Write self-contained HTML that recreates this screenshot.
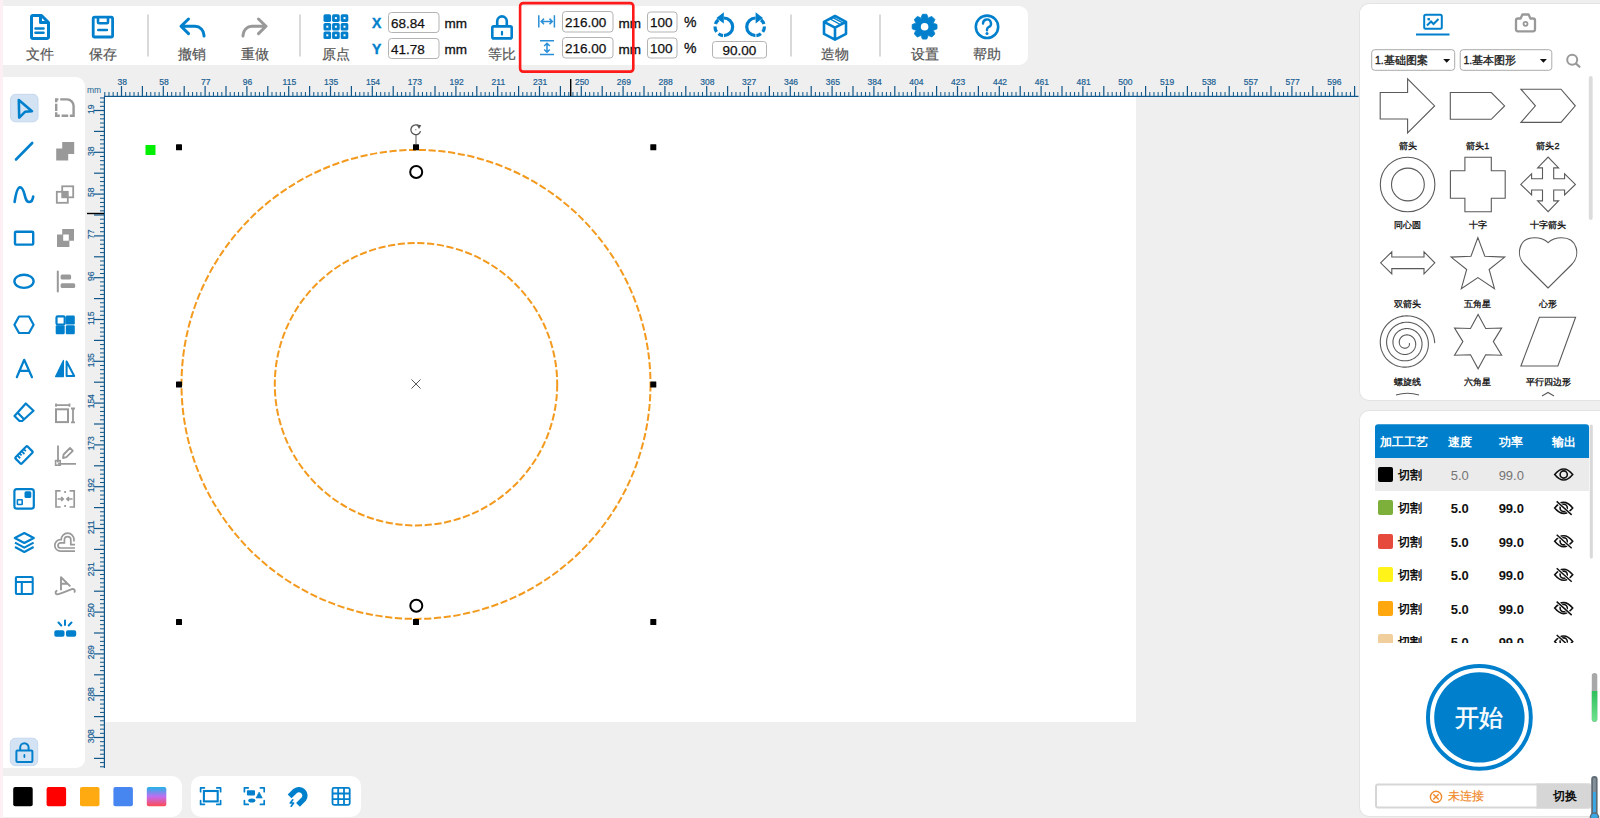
<!DOCTYPE html>
<html><head><meta charset="utf-8"><style>
html,body{margin:0;padding:0;}
body{width:1600px;height:818px;overflow:hidden;position:relative;background:#efefef;font-family:"Liberation Sans",sans-serif;}
.t{position:absolute;white-space:nowrap;}
svg.g{position:absolute;left:0;top:0;}
</style></head><body>
<div style="position:absolute;left:0px;top:0px;width:3px;height:818px;background:#fdf0f4;border-radius:0px;"></div><div style="position:absolute;left:3px;top:6px;width:1025px;height:59px;background:#fff;border-radius:0 9px 9px 0;"></div><div style="position:absolute;left:3px;top:77px;width:82px;height:691px;background:#fff;border-radius:0 9px 9px 0;"></div><div style="position:absolute;left:3px;top:776px;width:179px;height:41px;background:#fff;border-radius:0 10px 10px 0;"></div><div style="position:absolute;left:191px;top:776px;width:170px;height:41px;background:#fff;border-radius:10px;"></div><div style="position:absolute;left:104.5px;top:97px;width:1031.5px;height:625px;background:#fff;border-radius:0px;"></div><div style="position:absolute;left:1359.5px;top:3.5px;width:260px;height:396px;background:#fff;border-radius:9px;box-shadow:0 0 0 1px #e3e3e3;"></div><div style="position:absolute;left:1359.5px;top:410.5px;width:260px;height:405px;background:#fff;border-radius:9px;box-shadow:0 0 0 1px #e3e3e3;"></div>
<svg class="g" width="1600" height="818" viewBox="0 0 1600 818" style="z-index:1"><rect x="147" y="14.5" width="2" height="42" rx="0" fill="#d9d9d9" stroke="none" stroke-width="1" /><rect x="299" y="14.5" width="2" height="42" rx="0" fill="#d9d9d9" stroke="none" stroke-width="1" /><rect x="790" y="14.5" width="2" height="42" rx="0" fill="#d9d9d9" stroke="none" stroke-width="1" /><rect x="879" y="14.5" width="2" height="42" rx="0" fill="#d9d9d9" stroke="none" stroke-width="1" /><path d="M31.5 17 a1.5 1.5 0 0 1 1.5 -1.5 h8.5 l7 7 v14.5 a1.5 1.5 0 0 1 -1.5 1.5 h-14 a1.5 1.5 0 0 1 -1.5 -1.5 z" fill="none" stroke="#0080cc" stroke-width="3" stroke-linejoin="round"/><path d="M40.5 16 v6.5 h7" fill="none" stroke="#0080cc" stroke-width="3" stroke-linejoin="round"/><path d="M35.5 28.5 h8 M35.5 32.8 h8" stroke="#0080cc" stroke-width="2.6" stroke-linecap="round"/><rect x="93.2" y="17.2" width="19.4" height="19.8" rx="1.5" fill="none" stroke="#0080cc" stroke-width="2.8"/><path d="M98 17.5 v4.8 a1 1 0 0 0 1 1 h8 a1 1 0 0 0 1 -1 v-4.8" fill="none" stroke="#0080cc" stroke-width="2.6"/><path d="M98.3 30 h8.6" stroke="#0080cc" stroke-width="2.6" stroke-linecap="round"/><path d="M188.5 19 l-7.5 7.3 l7.5 7.3 M181.5 26.3 h13.5 a9 9 0 0 1 9 9 v0.8" fill="none" stroke="#0080cc" stroke-width="3" stroke-linecap="round" stroke-linejoin="round"/><path d="M258.5 19 l7.5 7.3 l-7.5 7.3 M265.5 26.3 h-13.5 a9 9 0 0 0 -9 9 v0.8" fill="none" stroke="#999999" stroke-width="3" stroke-linecap="round" stroke-linejoin="round"/><rect x="323.5" y="14.3" width="7.6" height="7.6" rx="1.6" fill="#0080cc" stroke="none" stroke-width="1" /><rect x="323.5" y="22.9" width="7.6" height="7.6" rx="1.6" fill="#0080cc" stroke="none" stroke-width="1" /><rect x="326.3" y="25.7" width="2" height="2" rx="0" fill="#fff" stroke="none" stroke-width="1" /><rect x="323.5" y="31.5" width="7.6" height="7.6" rx="1.6" fill="#0080cc" stroke="none" stroke-width="1" /><rect x="326.3" y="34.3" width="2" height="2" rx="0" fill="#fff" stroke="none" stroke-width="1" /><rect x="332.1" y="14.3" width="7.6" height="7.6" rx="1.6" fill="#0080cc" stroke="none" stroke-width="1" /><rect x="334.90000000000003" y="17.1" width="2" height="2" rx="0" fill="#fff" stroke="none" stroke-width="1" /><rect x="332.1" y="22.9" width="7.6" height="7.6" rx="1.6" fill="#0080cc" stroke="none" stroke-width="1" /><rect x="334.90000000000003" y="25.7" width="2" height="2" rx="0" fill="#fff" stroke="none" stroke-width="1" /><rect x="332.1" y="31.5" width="7.6" height="7.6" rx="1.6" fill="#0080cc" stroke="none" stroke-width="1" /><rect x="334.90000000000003" y="34.3" width="2" height="2" rx="0" fill="#fff" stroke="none" stroke-width="1" /><rect x="340.7" y="14.3" width="7.6" height="7.6" rx="1.6" fill="#0080cc" stroke="none" stroke-width="1" /><rect x="343.5" y="17.1" width="2" height="2" rx="0" fill="#fff" stroke="none" stroke-width="1" /><rect x="340.7" y="22.9" width="7.6" height="7.6" rx="1.6" fill="#0080cc" stroke="none" stroke-width="1" /><rect x="343.5" y="25.7" width="2" height="2" rx="0" fill="#fff" stroke="none" stroke-width="1" /><rect x="340.7" y="31.5" width="7.6" height="7.6" rx="1.6" fill="#0080cc" stroke="none" stroke-width="1" /><rect x="343.5" y="34.3" width="2" height="2" rx="0" fill="#fff" stroke="none" stroke-width="1" /><rect x="388.5" y="12.5" width="50.5" height="20" rx="3" fill="#fff" stroke="#b3b3b3" stroke-width="1"/><rect x="388.5" y="38.5" width="50.5" height="20" rx="3" fill="#fff" stroke="#b3b3b3" stroke-width="1"/><path d="M497.2 25.5 v-4.3 a4.8 4.8 0 0 1 9.6 0 v4.3" fill="none" stroke="#0080cc" stroke-width="2.6"/><rect x="492.3" y="26.4" width="19.4" height="12" rx="1.5" fill="none" stroke="#0080cc" stroke-width="2.6"/><path d="M502 31.8 v2.8" stroke="#0080cc" stroke-width="2.2" stroke-linecap="round"/><path d="M538.8 15.2 v12.2 M554.4 15.2 v12.2 M541 21.4 h11.5 M544 18.6 l-2.8 2.8 l2.8 2.8 M549.5 18.6 l2.8 2.8 l-2.8 2.8" fill="none" stroke="#2a8fd6" stroke-width="1.5"/><path d="M540 40.8 h14 M540 54.5 h14 M547 43 v9.5 M544.2 46 l2.8 -2.8 l2.8 2.8 M544.2 49.5 l2.8 2.8 l2.8 -2.8" fill="none" stroke="#2a8fd6" stroke-width="1.5"/><rect x="562.5" y="11.5" width="50.5" height="20.5" rx="3" fill="#fff" stroke="#b3b3b3" stroke-width="1"/><rect x="562.5" y="37.5" width="50.5" height="20.5" rx="3" fill="#fff" stroke="#b3b3b3" stroke-width="1"/><rect x="647.5" y="12.0" width="29.5" height="20" rx="3" fill="#fff" stroke="#b3b3b3" stroke-width="1"/><rect x="647.5" y="38.0" width="29.5" height="20" rx="3" fill="#fff" stroke="#b3b3b3" stroke-width="1"/><path d="M723.80 18.00 A8.8 8.8 0 0 1 723.95 35.60" fill="none" stroke="#0080cc" stroke-width="3.2"/><path d="M723.03 35.57 A8.8 8.8 0 0 1 718.50 33.83" fill="none" stroke="#0080cc" stroke-width="3.2"/><path d="M716.59 31.85 A8.8 8.8 0 0 1 715.01 26.49" fill="none" stroke="#0080cc" stroke-width="3.2"/><path d="M715.43 24.08 A8.8 8.8 0 0 1 718.38 19.87" fill="none" stroke="#0080cc" stroke-width="3.2"/><path d="M723.80 12.2 L716.40 17.9 L723.80 23.4 Z" fill="#0080cc"/><path d="M755.45 35.60 A8.8 8.8 0 0 1 755.60 18.00" fill="none" stroke="#0080cc" stroke-width="3.2"/><path d="M760.90 33.83 A8.8 8.8 0 0 1 756.37 35.57" fill="none" stroke="#0080cc" stroke-width="3.2"/><path d="M764.39 26.49 A8.8 8.8 0 0 1 762.81 31.85" fill="none" stroke="#0080cc" stroke-width="3.2"/><path d="M761.02 19.87 A8.8 8.8 0 0 1 763.97 24.08" fill="none" stroke="#0080cc" stroke-width="3.2"/><path d="M755.60 12.2 L763.00 17.9 L755.60 23.4 Z" fill="#0080cc"/><rect x="712.5" y="41.5" width="54" height="16.5" rx="3" fill="#fff" stroke="#b3b3b3" stroke-width="1"/><path d="M835 16 l11 5.8 v12 l-11 5.8 l-11 -5.8 v-12 z M824 21.8 l11 5.8 l11 -5.8 M835 27.6 v12" fill="none" stroke="#0080cc" stroke-width="2.6" stroke-linejoin="round"/><path d="M829.5 18.7 l10.8 5.8 M832.5 17.3 l10.8 5.8" stroke="#0080cc" stroke-width="1.4"/><path d="M921.29 17.05 L922.47 14.28 L926.73 14.28 L927.91 17.05 Q927.51 19.68 929.09 17.54 L931.87 16.41 L934.89 19.43 L933.76 22.21 Q931.62 23.79 934.25 23.39 L937.02 24.57 L937.02 28.83 L934.25 30.01 Q931.62 29.61 933.76 31.19 L934.89 33.97 L931.87 36.99 L929.09 35.86 Q927.51 33.72 927.91 36.35 L926.73 39.12 L922.47 39.12 L921.29 36.35 Q921.69 33.72 920.11 35.86 L917.33 36.99 L914.31 33.97 L915.44 31.19 Q917.58 29.61 914.95 30.01 L912.18 28.83 L912.18 24.57 L914.95 23.39 Q917.58 23.79 915.44 22.21 L914.31 19.43 L917.33 16.41 L920.11 17.54 Q921.69 19.68 921.29 17.05Z" fill="#0080cc" stroke="#0080cc" stroke-width="0.8" stroke-linejoin="round"/><circle cx="924.6" cy="26.7" r="3.8" fill="#fff"/><circle cx="987" cy="26.8" r="11.2" fill="none" stroke="#0080cc" stroke-width="2.6"/><path d="M983 23.5 a4 4 0 1 1 5.6 3.6 c-1 0.5 -1.6 1.2 -1.6 2.4 v0.8" fill="none" stroke="#0080cc" stroke-width="2.4" stroke-linecap="round"/><circle cx="987" cy="33.6" r="1.5" fill="#0080cc"/><rect x="10.5" y="94.3" width="27.5" height="27.5" rx="5" fill="#d4e3f4" stroke="#c5d8ef" stroke-width="1" /><path d="M18.8 100 L32 111.2 L25 111.8 L19.2 117.6 Z" fill="none" stroke="#0080cc" stroke-width="2.6" stroke-linejoin="round"/><path d="M60.2 99.4 H67 A6.6 6.6 0 0 1 73.6 106 V115.7 H69.8 M68.2 115.7 H61.6 M59.8 115.7 H56.2 V112.3 M56.2 111 V103.8 M56.2 102.3 V99.4 H58.4" fill="none" stroke="#999999" stroke-width="2.4"/><path d="M16 159.5 L32.2 143" stroke="#0080cc" stroke-width="2.6" stroke-linecap="round"/><path d="M56.2 160.4 v-12 h6 v-6.4 h12 v12 h-6 v6.4 z" fill="#999999"/><path d="M14.6 202 C16 192 17.5 187.5 20 187.2 C23.5 187 24.2 194 25.5 198 C26.6 201.5 27.8 202.2 29.5 202 C31.5 201.8 32.8 199.5 33.2 196.5" fill="none" stroke="#0080cc" stroke-width="2.6" stroke-linecap="round"/><rect x="62.2" y="186.3" width="11" height="11" fill="none" stroke="#999999" stroke-width="1.8"/><rect x="56.8" y="191.8" width="11" height="11" fill="none" stroke="#999999" stroke-width="1.8"/><rect x="62.2" y="191.8" width="5.5" height="5.5" rx="0" fill="#999999" stroke="none" stroke-width="1" /><rect x="15" y="231.8" width="18.2" height="12.8" rx="1" fill="none" stroke="#0080cc" stroke-width="2.4"/><path d="M57 234.5 h6.2 v6.2 h6.2 v6.2 h-12.4 z M62.2 229 h11.8 v11.8 h-5.2 v-6.3 h-6.6 z" fill="#999999"/><ellipse cx="24" cy="281.3" rx="9.6" ry="6.6" fill="none" stroke="#0080cc" stroke-width="2.4"/><path d="M57.8 271.5 v20" stroke="#999999" stroke-width="2" stroke-linecap="round"/><rect x="60.6" y="274.6" width="10.5" height="4.8" rx="1.5" fill="#999999" stroke="none" stroke-width="1" /><rect x="60.6" y="283.2" width="14.6" height="4.8" rx="1.5" fill="#999999" stroke="none" stroke-width="1" /><path d="M14.4 324.8 L19 316.5 H29 L33.6 324.8 L29 333 H19 Z" fill="none" stroke="#0080cc" stroke-width="2.2" stroke-linejoin="round"/><rect x="56.5" y="316.3" width="8.2" height="8.2" rx="1.2" fill="none" stroke="#0080cc" stroke-width="2.2" /><rect x="65.8" y="315.5" width="9" height="9" rx="1.2" fill="#0080cc" stroke="none" stroke-width="1" /><rect x="55.7" y="325.2" width="9" height="9" rx="1.2" fill="#0080cc" stroke="none" stroke-width="1" /><rect x="65.8" y="325.2" width="9" height="9" rx="1.2" fill="#0080cc" stroke="none" stroke-width="1" /><path d="M16.8 377.2 L24.2 359.8 L32 377.2 M19.3 370.9 H29.3" fill="none" stroke="#0080cc" stroke-width="2.2" stroke-linecap="round" stroke-linejoin="round"/><path d="M63.4 360.5 V376.6 H55.6 Z" fill="#0080cc" stroke="#0080cc" stroke-width="1.2" stroke-linejoin="round"/><path d="M66.6 361.5 V376 H74.2 Z" fill="none" stroke="#0080cc" stroke-width="2" stroke-linejoin="round"/><path d="M19.5 421 L14.5 416 L25.8 403.5 L33.5 410.8 L22.2 421 Z M17.5 412.6 L23.8 419" fill="none" stroke="#0080cc" stroke-width="2.2" stroke-linejoin="round"/><path d="M56 403.5 v3.2 M69.5 403.5 v3.2 M56 405.1 h13.5 M71 408.5 h4 M71 422.4 h4 M73 408.5 v13.9" fill="none" stroke="#999999" stroke-width="1.8"/><rect x="56" y="409.3" width="12" height="12.8" fill="none" stroke="#999999" stroke-width="2"/><g transform="rotate(-45 24 455)"><rect x="15.5" y="450.6" width="17" height="8.8" rx="1" fill="none" stroke="#0080cc" stroke-width="2.2"/><path d="M19 451 v3.6 M22 451 v2.6 M25 451 v3.6 M28 451 v2.6" stroke="#0080cc" stroke-width="1.8"/></g><path d="M58 445.5 V462.5 M58 463.8 H76" stroke="#999999" stroke-width="1.8"/><rect x="55.6" y="460.6" width="4.6" height="4.6" rx="0" fill="none" stroke="#999999" stroke-width="1.6" /><path d="M63 458 L63.6 454.5 L70 448 L72.8 450.8 L66.4 457.2 Z" fill="none" stroke="#999999" stroke-width="1.8" stroke-linejoin="round"/><rect x="14.4" y="489.1" width="19.4" height="19.6" rx="2.4" fill="none" stroke="#0080cc" stroke-width="2.2"/><rect x="24.5" y="491.2" width="6.8" height="6.8" rx="1.5" fill="#0080cc" stroke="none" stroke-width="1" /><rect x="17.4" y="499.7" width="4.8" height="4.8" rx="0.5" fill="none" stroke="#0080cc" stroke-width="1.6" /><path d="M60.6 490.8 H56 V507 H60.6 M69.6 490.8 H74.2 V507 H69.6 M65.1 491 V493 M65.1 505 V507 M57.5 499 H63.3 M61.2 497 l2 2 l-2 2 M72.6 499 H66.8 M68.9 497 l-2 2 l2 2" fill="none" stroke="#999999" stroke-width="1.7"/><path d="M24.3 533 L33.8 538 L24.3 543 L14.8 538 Z" fill="none" stroke="#0080cc" stroke-width="2.2" stroke-linejoin="round"/><path d="M15 542.6 L24.3 547.6 L33.6 542.6 M15 547 L24.3 552 L33.6 547" fill="none" stroke="#0080cc" stroke-width="2.2" stroke-linejoin="round"/><path d="M75 551.2 H60.6 A5.8 5.8 0 0 1 60.6 539.6 H61.2 A6.4 6.4 0 0 1 74 539.6 V541.6" fill="none" stroke="#999999" stroke-width="1.7"/><path d="M75 548 H60.6 A2.6 2.6 0 0 1 60.6 542.8 H64.4 V539.8 A3.2 3.2 0 0 1 70.8 539.8 V544.7 H75" fill="none" stroke="#999999" stroke-width="1.7"/><rect x="15.9" y="577" width="16.8" height="17" rx="1" fill="none" stroke="#0080cc" stroke-width="2.1"/><path d="M16 582 H32.6 M21.8 582 V594" stroke="#0080cc" stroke-width="2.1"/><path d="M61 590.2 V577.2 L70.3 586.4 M61 583.8 H67.4" fill="none" stroke="#999999" stroke-width="1.9" stroke-linejoin="round"/><path d="M56.6 590.8 C55 591.5 55.2 594.6 57.5 594.4 C62 593.5 67 591 71.8 589.2 C73.5 588.6 75.5 589.8 74.6 591.8" fill="none" stroke="#999999" stroke-width="1.9" stroke-linecap="round"/><path d="M65 620.5 V625 M58.5 622.5 l2.8 3 M71.5 622.5 l-2.8 3" stroke="#0080cc" stroke-width="2" stroke-linecap="round"/><rect x="54.3" y="630.2" width="10.2" height="6.6" rx="1.8" fill="#0080cc" stroke="none" stroke-width="1" /><rect x="66" y="630.2" width="10.2" height="6.6" rx="1.8" fill="#0080cc" stroke="none" stroke-width="1" /><rect x="10.3" y="738.2" width="27.4" height="27.4" rx="5" fill="#d4e3f4" stroke="#c5d8ef" stroke-width="1" /><path d="M20.2 750 v-2.5 a4.2 4.2 0 0 1 8.4 0 v2.5" fill="none" stroke="#0080cc" stroke-width="2"/><rect x="16.4" y="750.5" width="16" height="11.4" rx="1" fill="none" stroke="#0080cc" stroke-width="2"/><path d="M24.4 755 v2" stroke="#0080cc" stroke-width="1.8" stroke-linecap="round"/><rect x="104" y="95.8" width="1254.5" height="1.2" fill="#0f578b"/><rect x="103.8" y="97" width="1.2" height="671" fill="#0f578b"/><rect x="104.28" y="92" width="1" height="4" fill="#0f578b"/><rect x="108.46" y="92" width="1" height="4" fill="#0f578b"/><rect x="112.64" y="92" width="1" height="4" fill="#0f578b"/><rect x="116.82" y="92" width="1" height="4" fill="#0f578b"/><rect x="120.90" y="86" width="1.2" height="10" fill="#0f578b"/><rect x="125.18" y="92" width="1" height="4" fill="#0f578b"/><rect x="129.36" y="92" width="1" height="4" fill="#0f578b"/><rect x="133.54" y="92" width="1" height="4" fill="#0f578b"/><rect x="137.72" y="92" width="1" height="4" fill="#0f578b"/><rect x="141.80" y="86" width="1.2" height="10" fill="#0f578b"/><rect x="146.08" y="92" width="1" height="4" fill="#0f578b"/><rect x="150.26" y="92" width="1" height="4" fill="#0f578b"/><rect x="154.44" y="92" width="1" height="4" fill="#0f578b"/><rect x="158.62" y="92" width="1" height="4" fill="#0f578b"/><rect x="162.70" y="86" width="1.2" height="10" fill="#0f578b"/><rect x="166.98" y="92" width="1" height="4" fill="#0f578b"/><rect x="171.16" y="92" width="1" height="4" fill="#0f578b"/><rect x="175.34" y="92" width="1" height="4" fill="#0f578b"/><rect x="179.52" y="92" width="1" height="4" fill="#0f578b"/><rect x="183.60" y="86" width="1.2" height="10" fill="#0f578b"/><rect x="187.88" y="92" width="1" height="4" fill="#0f578b"/><rect x="192.06" y="92" width="1" height="4" fill="#0f578b"/><rect x="196.24" y="92" width="1" height="4" fill="#0f578b"/><rect x="200.42" y="92" width="1" height="4" fill="#0f578b"/><rect x="204.50" y="86" width="1.2" height="10" fill="#0f578b"/><rect x="208.78" y="92" width="1" height="4" fill="#0f578b"/><rect x="212.96" y="92" width="1" height="4" fill="#0f578b"/><rect x="217.14" y="92" width="1" height="4" fill="#0f578b"/><rect x="221.32" y="92" width="1" height="4" fill="#0f578b"/><rect x="225.40" y="86" width="1.2" height="10" fill="#0f578b"/><rect x="229.68" y="92" width="1" height="4" fill="#0f578b"/><rect x="233.86" y="92" width="1" height="4" fill="#0f578b"/><rect x="238.04" y="92" width="1" height="4" fill="#0f578b"/><rect x="242.22" y="92" width="1" height="4" fill="#0f578b"/><rect x="246.30" y="86" width="1.2" height="10" fill="#0f578b"/><rect x="250.58" y="92" width="1" height="4" fill="#0f578b"/><rect x="254.76" y="92" width="1" height="4" fill="#0f578b"/><rect x="258.94" y="92" width="1" height="4" fill="#0f578b"/><rect x="263.12" y="92" width="1" height="4" fill="#0f578b"/><rect x="267.20" y="86" width="1.2" height="10" fill="#0f578b"/><rect x="271.48" y="92" width="1" height="4" fill="#0f578b"/><rect x="275.66" y="92" width="1" height="4" fill="#0f578b"/><rect x="279.84" y="92" width="1" height="4" fill="#0f578b"/><rect x="284.02" y="92" width="1" height="4" fill="#0f578b"/><rect x="288.10" y="86" width="1.2" height="10" fill="#0f578b"/><rect x="292.38" y="92" width="1" height="4" fill="#0f578b"/><rect x="296.56" y="92" width="1" height="4" fill="#0f578b"/><rect x="300.74" y="92" width="1" height="4" fill="#0f578b"/><rect x="304.92" y="92" width="1" height="4" fill="#0f578b"/><rect x="309.00" y="86" width="1.2" height="10" fill="#0f578b"/><rect x="313.28" y="92" width="1" height="4" fill="#0f578b"/><rect x="317.46" y="92" width="1" height="4" fill="#0f578b"/><rect x="321.64" y="92" width="1" height="4" fill="#0f578b"/><rect x="325.82" y="92" width="1" height="4" fill="#0f578b"/><rect x="329.90" y="86" width="1.2" height="10" fill="#0f578b"/><rect x="334.18" y="92" width="1" height="4" fill="#0f578b"/><rect x="338.36" y="92" width="1" height="4" fill="#0f578b"/><rect x="342.54" y="92" width="1" height="4" fill="#0f578b"/><rect x="346.72" y="92" width="1" height="4" fill="#0f578b"/><rect x="350.80" y="86" width="1.2" height="10" fill="#0f578b"/><rect x="355.08" y="92" width="1" height="4" fill="#0f578b"/><rect x="359.26" y="92" width="1" height="4" fill="#0f578b"/><rect x="363.44" y="92" width="1" height="4" fill="#0f578b"/><rect x="367.62" y="92" width="1" height="4" fill="#0f578b"/><rect x="371.70" y="86" width="1.2" height="10" fill="#0f578b"/><rect x="375.98" y="92" width="1" height="4" fill="#0f578b"/><rect x="380.16" y="92" width="1" height="4" fill="#0f578b"/><rect x="384.34" y="92" width="1" height="4" fill="#0f578b"/><rect x="388.52" y="92" width="1" height="4" fill="#0f578b"/><rect x="392.60" y="86" width="1.2" height="10" fill="#0f578b"/><rect x="396.88" y="92" width="1" height="4" fill="#0f578b"/><rect x="401.06" y="92" width="1" height="4" fill="#0f578b"/><rect x="405.24" y="92" width="1" height="4" fill="#0f578b"/><rect x="409.42" y="92" width="1" height="4" fill="#0f578b"/><rect x="413.50" y="86" width="1.2" height="10" fill="#0f578b"/><rect x="417.78" y="92" width="1" height="4" fill="#0f578b"/><rect x="421.96" y="92" width="1" height="4" fill="#0f578b"/><rect x="426.14" y="92" width="1" height="4" fill="#0f578b"/><rect x="430.32" y="92" width="1" height="4" fill="#0f578b"/><rect x="434.40" y="86" width="1.2" height="10" fill="#0f578b"/><rect x="438.68" y="92" width="1" height="4" fill="#0f578b"/><rect x="442.86" y="92" width="1" height="4" fill="#0f578b"/><rect x="447.04" y="92" width="1" height="4" fill="#0f578b"/><rect x="451.22" y="92" width="1" height="4" fill="#0f578b"/><rect x="455.30" y="86" width="1.2" height="10" fill="#0f578b"/><rect x="459.58" y="92" width="1" height="4" fill="#0f578b"/><rect x="463.76" y="92" width="1" height="4" fill="#0f578b"/><rect x="467.94" y="92" width="1" height="4" fill="#0f578b"/><rect x="472.12" y="92" width="1" height="4" fill="#0f578b"/><rect x="476.20" y="86" width="1.2" height="10" fill="#0f578b"/><rect x="480.48" y="92" width="1" height="4" fill="#0f578b"/><rect x="484.66" y="92" width="1" height="4" fill="#0f578b"/><rect x="488.84" y="92" width="1" height="4" fill="#0f578b"/><rect x="493.02" y="92" width="1" height="4" fill="#0f578b"/><rect x="497.10" y="86" width="1.2" height="10" fill="#0f578b"/><rect x="501.38" y="92" width="1" height="4" fill="#0f578b"/><rect x="505.56" y="92" width="1" height="4" fill="#0f578b"/><rect x="509.74" y="92" width="1" height="4" fill="#0f578b"/><rect x="513.92" y="92" width="1" height="4" fill="#0f578b"/><rect x="518.00" y="86" width="1.2" height="10" fill="#0f578b"/><rect x="522.28" y="92" width="1" height="4" fill="#0f578b"/><rect x="526.46" y="92" width="1" height="4" fill="#0f578b"/><rect x="530.64" y="92" width="1" height="4" fill="#0f578b"/><rect x="534.82" y="92" width="1" height="4" fill="#0f578b"/><rect x="538.90" y="86" width="1.2" height="10" fill="#0f578b"/><rect x="543.18" y="92" width="1" height="4" fill="#0f578b"/><rect x="547.36" y="92" width="1" height="4" fill="#0f578b"/><rect x="551.54" y="92" width="1" height="4" fill="#0f578b"/><rect x="555.72" y="92" width="1" height="4" fill="#0f578b"/><rect x="559.80" y="86" width="1.2" height="10" fill="#0f578b"/><rect x="564.08" y="92" width="1" height="4" fill="#0f578b"/><rect x="568.26" y="92" width="1" height="4" fill="#0f578b"/><rect x="572.44" y="92" width="1" height="4" fill="#0f578b"/><rect x="576.62" y="92" width="1" height="4" fill="#0f578b"/><rect x="580.70" y="86" width="1.2" height="10" fill="#0f578b"/><rect x="584.98" y="92" width="1" height="4" fill="#0f578b"/><rect x="589.16" y="92" width="1" height="4" fill="#0f578b"/><rect x="593.34" y="92" width="1" height="4" fill="#0f578b"/><rect x="597.52" y="92" width="1" height="4" fill="#0f578b"/><rect x="601.60" y="86" width="1.2" height="10" fill="#0f578b"/><rect x="605.88" y="92" width="1" height="4" fill="#0f578b"/><rect x="610.06" y="92" width="1" height="4" fill="#0f578b"/><rect x="614.24" y="92" width="1" height="4" fill="#0f578b"/><rect x="618.42" y="92" width="1" height="4" fill="#0f578b"/><rect x="622.50" y="86" width="1.2" height="10" fill="#0f578b"/><rect x="626.78" y="92" width="1" height="4" fill="#0f578b"/><rect x="630.96" y="92" width="1" height="4" fill="#0f578b"/><rect x="635.14" y="92" width="1" height="4" fill="#0f578b"/><rect x="639.32" y="92" width="1" height="4" fill="#0f578b"/><rect x="643.40" y="86" width="1.2" height="10" fill="#0f578b"/><rect x="647.68" y="92" width="1" height="4" fill="#0f578b"/><rect x="651.86" y="92" width="1" height="4" fill="#0f578b"/><rect x="656.04" y="92" width="1" height="4" fill="#0f578b"/><rect x="660.22" y="92" width="1" height="4" fill="#0f578b"/><rect x="664.30" y="86" width="1.2" height="10" fill="#0f578b"/><rect x="668.58" y="92" width="1" height="4" fill="#0f578b"/><rect x="672.76" y="92" width="1" height="4" fill="#0f578b"/><rect x="676.94" y="92" width="1" height="4" fill="#0f578b"/><rect x="681.12" y="92" width="1" height="4" fill="#0f578b"/><rect x="685.20" y="86" width="1.2" height="10" fill="#0f578b"/><rect x="689.48" y="92" width="1" height="4" fill="#0f578b"/><rect x="693.66" y="92" width="1" height="4" fill="#0f578b"/><rect x="697.84" y="92" width="1" height="4" fill="#0f578b"/><rect x="702.02" y="92" width="1" height="4" fill="#0f578b"/><rect x="706.10" y="86" width="1.2" height="10" fill="#0f578b"/><rect x="710.38" y="92" width="1" height="4" fill="#0f578b"/><rect x="714.56" y="92" width="1" height="4" fill="#0f578b"/><rect x="718.74" y="92" width="1" height="4" fill="#0f578b"/><rect x="722.92" y="92" width="1" height="4" fill="#0f578b"/><rect x="727.00" y="86" width="1.2" height="10" fill="#0f578b"/><rect x="731.28" y="92" width="1" height="4" fill="#0f578b"/><rect x="735.46" y="92" width="1" height="4" fill="#0f578b"/><rect x="739.64" y="92" width="1" height="4" fill="#0f578b"/><rect x="743.82" y="92" width="1" height="4" fill="#0f578b"/><rect x="747.90" y="86" width="1.2" height="10" fill="#0f578b"/><rect x="752.18" y="92" width="1" height="4" fill="#0f578b"/><rect x="756.36" y="92" width="1" height="4" fill="#0f578b"/><rect x="760.54" y="92" width="1" height="4" fill="#0f578b"/><rect x="764.72" y="92" width="1" height="4" fill="#0f578b"/><rect x="768.80" y="86" width="1.2" height="10" fill="#0f578b"/><rect x="773.08" y="92" width="1" height="4" fill="#0f578b"/><rect x="777.26" y="92" width="1" height="4" fill="#0f578b"/><rect x="781.44" y="92" width="1" height="4" fill="#0f578b"/><rect x="785.62" y="92" width="1" height="4" fill="#0f578b"/><rect x="789.70" y="86" width="1.2" height="10" fill="#0f578b"/><rect x="793.98" y="92" width="1" height="4" fill="#0f578b"/><rect x="798.16" y="92" width="1" height="4" fill="#0f578b"/><rect x="802.34" y="92" width="1" height="4" fill="#0f578b"/><rect x="806.52" y="92" width="1" height="4" fill="#0f578b"/><rect x="810.60" y="86" width="1.2" height="10" fill="#0f578b"/><rect x="814.88" y="92" width="1" height="4" fill="#0f578b"/><rect x="819.06" y="92" width="1" height="4" fill="#0f578b"/><rect x="823.24" y="92" width="1" height="4" fill="#0f578b"/><rect x="827.42" y="92" width="1" height="4" fill="#0f578b"/><rect x="831.50" y="86" width="1.2" height="10" fill="#0f578b"/><rect x="835.78" y="92" width="1" height="4" fill="#0f578b"/><rect x="839.96" y="92" width="1" height="4" fill="#0f578b"/><rect x="844.14" y="92" width="1" height="4" fill="#0f578b"/><rect x="848.32" y="92" width="1" height="4" fill="#0f578b"/><rect x="852.40" y="86" width="1.2" height="10" fill="#0f578b"/><rect x="856.68" y="92" width="1" height="4" fill="#0f578b"/><rect x="860.86" y="92" width="1" height="4" fill="#0f578b"/><rect x="865.04" y="92" width="1" height="4" fill="#0f578b"/><rect x="869.22" y="92" width="1" height="4" fill="#0f578b"/><rect x="873.30" y="86" width="1.2" height="10" fill="#0f578b"/><rect x="877.58" y="92" width="1" height="4" fill="#0f578b"/><rect x="881.76" y="92" width="1" height="4" fill="#0f578b"/><rect x="885.94" y="92" width="1" height="4" fill="#0f578b"/><rect x="890.12" y="92" width="1" height="4" fill="#0f578b"/><rect x="894.20" y="86" width="1.2" height="10" fill="#0f578b"/><rect x="898.48" y="92" width="1" height="4" fill="#0f578b"/><rect x="902.66" y="92" width="1" height="4" fill="#0f578b"/><rect x="906.84" y="92" width="1" height="4" fill="#0f578b"/><rect x="911.02" y="92" width="1" height="4" fill="#0f578b"/><rect x="915.10" y="86" width="1.2" height="10" fill="#0f578b"/><rect x="919.38" y="92" width="1" height="4" fill="#0f578b"/><rect x="923.56" y="92" width="1" height="4" fill="#0f578b"/><rect x="927.74" y="92" width="1" height="4" fill="#0f578b"/><rect x="931.92" y="92" width="1" height="4" fill="#0f578b"/><rect x="936.00" y="86" width="1.2" height="10" fill="#0f578b"/><rect x="940.28" y="92" width="1" height="4" fill="#0f578b"/><rect x="944.46" y="92" width="1" height="4" fill="#0f578b"/><rect x="948.64" y="92" width="1" height="4" fill="#0f578b"/><rect x="952.82" y="92" width="1" height="4" fill="#0f578b"/><rect x="956.90" y="86" width="1.2" height="10" fill="#0f578b"/><rect x="961.18" y="92" width="1" height="4" fill="#0f578b"/><rect x="965.36" y="92" width="1" height="4" fill="#0f578b"/><rect x="969.54" y="92" width="1" height="4" fill="#0f578b"/><rect x="973.72" y="92" width="1" height="4" fill="#0f578b"/><rect x="977.80" y="86" width="1.2" height="10" fill="#0f578b"/><rect x="982.08" y="92" width="1" height="4" fill="#0f578b"/><rect x="986.26" y="92" width="1" height="4" fill="#0f578b"/><rect x="990.44" y="92" width="1" height="4" fill="#0f578b"/><rect x="994.62" y="92" width="1" height="4" fill="#0f578b"/><rect x="998.70" y="86" width="1.2" height="10" fill="#0f578b"/><rect x="1002.98" y="92" width="1" height="4" fill="#0f578b"/><rect x="1007.16" y="92" width="1" height="4" fill="#0f578b"/><rect x="1011.34" y="92" width="1" height="4" fill="#0f578b"/><rect x="1015.52" y="92" width="1" height="4" fill="#0f578b"/><rect x="1019.60" y="86" width="1.2" height="10" fill="#0f578b"/><rect x="1023.88" y="92" width="1" height="4" fill="#0f578b"/><rect x="1028.06" y="92" width="1" height="4" fill="#0f578b"/><rect x="1032.24" y="92" width="1" height="4" fill="#0f578b"/><rect x="1036.42" y="92" width="1" height="4" fill="#0f578b"/><rect x="1040.50" y="86" width="1.2" height="10" fill="#0f578b"/><rect x="1044.78" y="92" width="1" height="4" fill="#0f578b"/><rect x="1048.96" y="92" width="1" height="4" fill="#0f578b"/><rect x="1053.14" y="92" width="1" height="4" fill="#0f578b"/><rect x="1057.32" y="92" width="1" height="4" fill="#0f578b"/><rect x="1061.40" y="86" width="1.2" height="10" fill="#0f578b"/><rect x="1065.68" y="92" width="1" height="4" fill="#0f578b"/><rect x="1069.86" y="92" width="1" height="4" fill="#0f578b"/><rect x="1074.04" y="92" width="1" height="4" fill="#0f578b"/><rect x="1078.22" y="92" width="1" height="4" fill="#0f578b"/><rect x="1082.30" y="86" width="1.2" height="10" fill="#0f578b"/><rect x="1086.58" y="92" width="1" height="4" fill="#0f578b"/><rect x="1090.76" y="92" width="1" height="4" fill="#0f578b"/><rect x="1094.94" y="92" width="1" height="4" fill="#0f578b"/><rect x="1099.12" y="92" width="1" height="4" fill="#0f578b"/><rect x="1103.20" y="86" width="1.2" height="10" fill="#0f578b"/><rect x="1107.48" y="92" width="1" height="4" fill="#0f578b"/><rect x="1111.66" y="92" width="1" height="4" fill="#0f578b"/><rect x="1115.84" y="92" width="1" height="4" fill="#0f578b"/><rect x="1120.02" y="92" width="1" height="4" fill="#0f578b"/><rect x="1124.10" y="86" width="1.2" height="10" fill="#0f578b"/><rect x="1128.38" y="92" width="1" height="4" fill="#0f578b"/><rect x="1132.56" y="92" width="1" height="4" fill="#0f578b"/><rect x="1136.74" y="92" width="1" height="4" fill="#0f578b"/><rect x="1140.92" y="92" width="1" height="4" fill="#0f578b"/><rect x="1145.00" y="86" width="1.2" height="10" fill="#0f578b"/><rect x="1149.28" y="92" width="1" height="4" fill="#0f578b"/><rect x="1153.46" y="92" width="1" height="4" fill="#0f578b"/><rect x="1157.64" y="92" width="1" height="4" fill="#0f578b"/><rect x="1161.82" y="92" width="1" height="4" fill="#0f578b"/><rect x="1165.90" y="86" width="1.2" height="10" fill="#0f578b"/><rect x="1170.18" y="92" width="1" height="4" fill="#0f578b"/><rect x="1174.36" y="92" width="1" height="4" fill="#0f578b"/><rect x="1178.54" y="92" width="1" height="4" fill="#0f578b"/><rect x="1182.72" y="92" width="1" height="4" fill="#0f578b"/><rect x="1186.80" y="86" width="1.2" height="10" fill="#0f578b"/><rect x="1191.08" y="92" width="1" height="4" fill="#0f578b"/><rect x="1195.26" y="92" width="1" height="4" fill="#0f578b"/><rect x="1199.44" y="92" width="1" height="4" fill="#0f578b"/><rect x="1203.62" y="92" width="1" height="4" fill="#0f578b"/><rect x="1207.70" y="86" width="1.2" height="10" fill="#0f578b"/><rect x="1211.98" y="92" width="1" height="4" fill="#0f578b"/><rect x="1216.16" y="92" width="1" height="4" fill="#0f578b"/><rect x="1220.34" y="92" width="1" height="4" fill="#0f578b"/><rect x="1224.52" y="92" width="1" height="4" fill="#0f578b"/><rect x="1228.60" y="86" width="1.2" height="10" fill="#0f578b"/><rect x="1232.88" y="92" width="1" height="4" fill="#0f578b"/><rect x="1237.06" y="92" width="1" height="4" fill="#0f578b"/><rect x="1241.24" y="92" width="1" height="4" fill="#0f578b"/><rect x="1245.42" y="92" width="1" height="4" fill="#0f578b"/><rect x="1249.50" y="86" width="1.2" height="10" fill="#0f578b"/><rect x="1253.78" y="92" width="1" height="4" fill="#0f578b"/><rect x="1257.96" y="92" width="1" height="4" fill="#0f578b"/><rect x="1262.14" y="92" width="1" height="4" fill="#0f578b"/><rect x="1266.32" y="92" width="1" height="4" fill="#0f578b"/><rect x="1270.40" y="86" width="1.2" height="10" fill="#0f578b"/><rect x="1274.68" y="92" width="1" height="4" fill="#0f578b"/><rect x="1278.86" y="92" width="1" height="4" fill="#0f578b"/><rect x="1283.04" y="92" width="1" height="4" fill="#0f578b"/><rect x="1287.22" y="92" width="1" height="4" fill="#0f578b"/><rect x="1291.30" y="86" width="1.2" height="10" fill="#0f578b"/><rect x="1295.58" y="92" width="1" height="4" fill="#0f578b"/><rect x="1299.76" y="92" width="1" height="4" fill="#0f578b"/><rect x="1303.94" y="92" width="1" height="4" fill="#0f578b"/><rect x="1308.12" y="92" width="1" height="4" fill="#0f578b"/><rect x="1312.20" y="86" width="1.2" height="10" fill="#0f578b"/><rect x="1316.48" y="92" width="1" height="4" fill="#0f578b"/><rect x="1320.66" y="92" width="1" height="4" fill="#0f578b"/><rect x="1324.84" y="92" width="1" height="4" fill="#0f578b"/><rect x="1329.02" y="92" width="1" height="4" fill="#0f578b"/><rect x="1333.10" y="86" width="1.2" height="10" fill="#0f578b"/><rect x="1337.38" y="92" width="1" height="4" fill="#0f578b"/><rect x="1341.56" y="92" width="1" height="4" fill="#0f578b"/><rect x="1345.74" y="92" width="1" height="4" fill="#0f578b"/><rect x="1349.92" y="92" width="1" height="4" fill="#0f578b"/><rect x="1354.00" y="86" width="1.2" height="10" fill="#0f578b"/><rect x="100" y="97.46" width="4" height="1" fill="#0f578b"/><rect x="100" y="101.64" width="4" height="1" fill="#0f578b"/><rect x="100" y="105.82" width="4" height="1" fill="#0f578b"/><rect x="94" y="109.90" width="10" height="1.2" fill="#0f578b"/><rect x="100" y="114.18" width="4" height="1" fill="#0f578b"/><rect x="100" y="118.36" width="4" height="1" fill="#0f578b"/><rect x="100" y="122.54" width="4" height="1" fill="#0f578b"/><rect x="100" y="126.72" width="4" height="1" fill="#0f578b"/><rect x="94" y="130.80" width="10" height="1.2" fill="#0f578b"/><rect x="100" y="135.08" width="4" height="1" fill="#0f578b"/><rect x="100" y="139.26" width="4" height="1" fill="#0f578b"/><rect x="100" y="143.44" width="4" height="1" fill="#0f578b"/><rect x="100" y="147.62" width="4" height="1" fill="#0f578b"/><rect x="94" y="151.70" width="10" height="1.2" fill="#0f578b"/><rect x="100" y="155.98" width="4" height="1" fill="#0f578b"/><rect x="100" y="160.16" width="4" height="1" fill="#0f578b"/><rect x="100" y="164.34" width="4" height="1" fill="#0f578b"/><rect x="100" y="168.52" width="4" height="1" fill="#0f578b"/><rect x="94" y="172.60" width="10" height="1.2" fill="#0f578b"/><rect x="100" y="176.88" width="4" height="1" fill="#0f578b"/><rect x="100" y="181.06" width="4" height="1" fill="#0f578b"/><rect x="100" y="185.24" width="4" height="1" fill="#0f578b"/><rect x="100" y="189.42" width="4" height="1" fill="#0f578b"/><rect x="94" y="193.50" width="10" height="1.2" fill="#0f578b"/><rect x="100" y="197.78" width="4" height="1" fill="#0f578b"/><rect x="100" y="201.96" width="4" height="1" fill="#0f578b"/><rect x="100" y="206.14" width="4" height="1" fill="#0f578b"/><rect x="100" y="210.32" width="4" height="1" fill="#0f578b"/><rect x="94" y="214.40" width="10" height="1.2" fill="#0f578b"/><rect x="100" y="218.68" width="4" height="1" fill="#0f578b"/><rect x="100" y="222.86" width="4" height="1" fill="#0f578b"/><rect x="100" y="227.04" width="4" height="1" fill="#0f578b"/><rect x="100" y="231.22" width="4" height="1" fill="#0f578b"/><rect x="94" y="235.30" width="10" height="1.2" fill="#0f578b"/><rect x="100" y="239.58" width="4" height="1" fill="#0f578b"/><rect x="100" y="243.76" width="4" height="1" fill="#0f578b"/><rect x="100" y="247.94" width="4" height="1" fill="#0f578b"/><rect x="100" y="252.12" width="4" height="1" fill="#0f578b"/><rect x="94" y="256.20" width="10" height="1.2" fill="#0f578b"/><rect x="100" y="260.48" width="4" height="1" fill="#0f578b"/><rect x="100" y="264.66" width="4" height="1" fill="#0f578b"/><rect x="100" y="268.84" width="4" height="1" fill="#0f578b"/><rect x="100" y="273.02" width="4" height="1" fill="#0f578b"/><rect x="94" y="277.10" width="10" height="1.2" fill="#0f578b"/><rect x="100" y="281.38" width="4" height="1" fill="#0f578b"/><rect x="100" y="285.56" width="4" height="1" fill="#0f578b"/><rect x="100" y="289.74" width="4" height="1" fill="#0f578b"/><rect x="100" y="293.92" width="4" height="1" fill="#0f578b"/><rect x="94" y="298.00" width="10" height="1.2" fill="#0f578b"/><rect x="100" y="302.28" width="4" height="1" fill="#0f578b"/><rect x="100" y="306.46" width="4" height="1" fill="#0f578b"/><rect x="100" y="310.64" width="4" height="1" fill="#0f578b"/><rect x="100" y="314.82" width="4" height="1" fill="#0f578b"/><rect x="94" y="318.90" width="10" height="1.2" fill="#0f578b"/><rect x="100" y="323.18" width="4" height="1" fill="#0f578b"/><rect x="100" y="327.36" width="4" height="1" fill="#0f578b"/><rect x="100" y="331.54" width="4" height="1" fill="#0f578b"/><rect x="100" y="335.72" width="4" height="1" fill="#0f578b"/><rect x="94" y="339.80" width="10" height="1.2" fill="#0f578b"/><rect x="100" y="344.08" width="4" height="1" fill="#0f578b"/><rect x="100" y="348.26" width="4" height="1" fill="#0f578b"/><rect x="100" y="352.44" width="4" height="1" fill="#0f578b"/><rect x="100" y="356.62" width="4" height="1" fill="#0f578b"/><rect x="94" y="360.70" width="10" height="1.2" fill="#0f578b"/><rect x="100" y="364.98" width="4" height="1" fill="#0f578b"/><rect x="100" y="369.16" width="4" height="1" fill="#0f578b"/><rect x="100" y="373.34" width="4" height="1" fill="#0f578b"/><rect x="100" y="377.52" width="4" height="1" fill="#0f578b"/><rect x="94" y="381.60" width="10" height="1.2" fill="#0f578b"/><rect x="100" y="385.88" width="4" height="1" fill="#0f578b"/><rect x="100" y="390.06" width="4" height="1" fill="#0f578b"/><rect x="100" y="394.24" width="4" height="1" fill="#0f578b"/><rect x="100" y="398.42" width="4" height="1" fill="#0f578b"/><rect x="94" y="402.50" width="10" height="1.2" fill="#0f578b"/><rect x="100" y="406.78" width="4" height="1" fill="#0f578b"/><rect x="100" y="410.96" width="4" height="1" fill="#0f578b"/><rect x="100" y="415.14" width="4" height="1" fill="#0f578b"/><rect x="100" y="419.32" width="4" height="1" fill="#0f578b"/><rect x="94" y="423.40" width="10" height="1.2" fill="#0f578b"/><rect x="100" y="427.68" width="4" height="1" fill="#0f578b"/><rect x="100" y="431.86" width="4" height="1" fill="#0f578b"/><rect x="100" y="436.04" width="4" height="1" fill="#0f578b"/><rect x="100" y="440.22" width="4" height="1" fill="#0f578b"/><rect x="94" y="444.30" width="10" height="1.2" fill="#0f578b"/><rect x="100" y="448.58" width="4" height="1" fill="#0f578b"/><rect x="100" y="452.76" width="4" height="1" fill="#0f578b"/><rect x="100" y="456.94" width="4" height="1" fill="#0f578b"/><rect x="100" y="461.12" width="4" height="1" fill="#0f578b"/><rect x="94" y="465.20" width="10" height="1.2" fill="#0f578b"/><rect x="100" y="469.48" width="4" height="1" fill="#0f578b"/><rect x="100" y="473.66" width="4" height="1" fill="#0f578b"/><rect x="100" y="477.84" width="4" height="1" fill="#0f578b"/><rect x="100" y="482.02" width="4" height="1" fill="#0f578b"/><rect x="94" y="486.10" width="10" height="1.2" fill="#0f578b"/><rect x="100" y="490.38" width="4" height="1" fill="#0f578b"/><rect x="100" y="494.56" width="4" height="1" fill="#0f578b"/><rect x="100" y="498.74" width="4" height="1" fill="#0f578b"/><rect x="100" y="502.92" width="4" height="1" fill="#0f578b"/><rect x="94" y="507.00" width="10" height="1.2" fill="#0f578b"/><rect x="100" y="511.28" width="4" height="1" fill="#0f578b"/><rect x="100" y="515.46" width="4" height="1" fill="#0f578b"/><rect x="100" y="519.64" width="4" height="1" fill="#0f578b"/><rect x="100" y="523.82" width="4" height="1" fill="#0f578b"/><rect x="94" y="527.90" width="10" height="1.2" fill="#0f578b"/><rect x="100" y="532.18" width="4" height="1" fill="#0f578b"/><rect x="100" y="536.36" width="4" height="1" fill="#0f578b"/><rect x="100" y="540.54" width="4" height="1" fill="#0f578b"/><rect x="100" y="544.72" width="4" height="1" fill="#0f578b"/><rect x="94" y="548.80" width="10" height="1.2" fill="#0f578b"/><rect x="100" y="553.08" width="4" height="1" fill="#0f578b"/><rect x="100" y="557.26" width="4" height="1" fill="#0f578b"/><rect x="100" y="561.44" width="4" height="1" fill="#0f578b"/><rect x="100" y="565.62" width="4" height="1" fill="#0f578b"/><rect x="94" y="569.70" width="10" height="1.2" fill="#0f578b"/><rect x="100" y="573.98" width="4" height="1" fill="#0f578b"/><rect x="100" y="578.16" width="4" height="1" fill="#0f578b"/><rect x="100" y="582.34" width="4" height="1" fill="#0f578b"/><rect x="100" y="586.52" width="4" height="1" fill="#0f578b"/><rect x="94" y="590.60" width="10" height="1.2" fill="#0f578b"/><rect x="100" y="594.88" width="4" height="1" fill="#0f578b"/><rect x="100" y="599.06" width="4" height="1" fill="#0f578b"/><rect x="100" y="603.24" width="4" height="1" fill="#0f578b"/><rect x="100" y="607.42" width="4" height="1" fill="#0f578b"/><rect x="94" y="611.50" width="10" height="1.2" fill="#0f578b"/><rect x="100" y="615.78" width="4" height="1" fill="#0f578b"/><rect x="100" y="619.96" width="4" height="1" fill="#0f578b"/><rect x="100" y="624.14" width="4" height="1" fill="#0f578b"/><rect x="100" y="628.32" width="4" height="1" fill="#0f578b"/><rect x="94" y="632.40" width="10" height="1.2" fill="#0f578b"/><rect x="100" y="636.68" width="4" height="1" fill="#0f578b"/><rect x="100" y="640.86" width="4" height="1" fill="#0f578b"/><rect x="100" y="645.04" width="4" height="1" fill="#0f578b"/><rect x="100" y="649.22" width="4" height="1" fill="#0f578b"/><rect x="94" y="653.30" width="10" height="1.2" fill="#0f578b"/><rect x="100" y="657.58" width="4" height="1" fill="#0f578b"/><rect x="100" y="661.76" width="4" height="1" fill="#0f578b"/><rect x="100" y="665.94" width="4" height="1" fill="#0f578b"/><rect x="100" y="670.12" width="4" height="1" fill="#0f578b"/><rect x="94" y="674.20" width="10" height="1.2" fill="#0f578b"/><rect x="100" y="678.48" width="4" height="1" fill="#0f578b"/><rect x="100" y="682.66" width="4" height="1" fill="#0f578b"/><rect x="100" y="686.84" width="4" height="1" fill="#0f578b"/><rect x="100" y="691.02" width="4" height="1" fill="#0f578b"/><rect x="94" y="695.10" width="10" height="1.2" fill="#0f578b"/><rect x="100" y="699.38" width="4" height="1" fill="#0f578b"/><rect x="100" y="703.56" width="4" height="1" fill="#0f578b"/><rect x="100" y="707.74" width="4" height="1" fill="#0f578b"/><rect x="100" y="711.92" width="4" height="1" fill="#0f578b"/><rect x="94" y="716.00" width="10" height="1.2" fill="#0f578b"/><rect x="100" y="720.28" width="4" height="1" fill="#0f578b"/><rect x="100" y="724.46" width="4" height="1" fill="#0f578b"/><rect x="100" y="728.64" width="4" height="1" fill="#0f578b"/><rect x="100" y="732.82" width="4" height="1" fill="#0f578b"/><rect x="94" y="736.90" width="10" height="1.2" fill="#0f578b"/><rect x="100" y="741.18" width="4" height="1" fill="#0f578b"/><rect x="100" y="745.36" width="4" height="1" fill="#0f578b"/><rect x="100" y="749.54" width="4" height="1" fill="#0f578b"/><rect x="100" y="753.72" width="4" height="1" fill="#0f578b"/><rect x="94" y="757.80" width="10" height="1.2" fill="#0f578b"/><rect x="100" y="762.08" width="4" height="1" fill="#0f578b"/><rect x="100" y="766.26" width="4" height="1" fill="#0f578b"/><rect x="570" y="79" width="1.4" height="17" rx="0" fill="#000" stroke="none" stroke-width="1" /><rect x="87" y="212.8" width="17" height="1.4" rx="0" fill="#000" stroke="none" stroke-width="1" /><circle cx="416" cy="384.4" r="234.5" fill="none" stroke="#f39a1e" stroke-width="2" stroke-dasharray="7.2 2.6"/><circle cx="416" cy="384.3" r="141.2" fill="none" stroke="#f39a1e" stroke-width="2" stroke-dasharray="7.2 2.6"/><rect x="145.5" y="145" width="10" height="10" rx="0.5" fill="#00ee00" stroke="none" stroke-width="1" /><rect x="176" y="144.3" width="6" height="6" rx="0.5" fill="#000" stroke="none" stroke-width="1" /><rect x="176" y="381.6" width="6" height="6" rx="0.5" fill="#000" stroke="none" stroke-width="1" /><rect x="176" y="618.9" width="6" height="6" rx="0.5" fill="#000" stroke="none" stroke-width="1" /><rect x="413" y="144.3" width="6" height="6" rx="0.5" fill="#000" stroke="none" stroke-width="1" /><rect x="413" y="618.9" width="6" height="6" rx="0.5" fill="#000" stroke="none" stroke-width="1" /><rect x="650.3" y="144.3" width="6" height="6" rx="0.5" fill="#000" stroke="none" stroke-width="1" /><rect x="650.3" y="381.6" width="6" height="6" rx="0.5" fill="#000" stroke="none" stroke-width="1" /><rect x="650.3" y="618.9" width="6" height="6" rx="0.5" fill="#000" stroke="none" stroke-width="1" /><path d="M416 134.5 V144" stroke="#777" stroke-width="1.2"/><path d="M420.53 131.07 A4.9 4.9 0 1 1 417.48 125.20" fill="none" stroke="#555" stroke-width="1.3"/><path d="M416.3 124.2 L421.3 125.2 L419 129 Z" fill="#555"/><circle cx="415.8" cy="129.8" r="0.8" fill="#999"/><circle cx="416.2" cy="172" r="6" fill="none" stroke="#000" stroke-width="2"/><circle cx="416.3" cy="605.7" r="6" fill="none" stroke="#000" stroke-width="2"/><path d="M411.5 379.5 l9 9 M420.5 379.5 l-9 9" stroke="#555" stroke-width="1"/><rect x="13.2" y="787" width="19.5" height="19.3" rx="2" fill="#000" stroke="none" stroke-width="1" /><rect x="46.599999999999994" y="787" width="19.5" height="19.3" rx="2" fill="#ff0000" stroke="none" stroke-width="1" /><rect x="80.0" y="787" width="19.5" height="19.3" rx="2" fill="#ffaa11" stroke="none" stroke-width="1" /><rect x="113.39999999999999" y="787" width="19.5" height="19.3" rx="2" fill="#4785f0" stroke="none" stroke-width="1" /><defs><linearGradient id="gr" x1="0" y1="0" x2="0" y2="1"><stop offset="0" stop-color="#22b5e8"/><stop offset="0.5" stop-color="#c06cf0"/><stop offset="1" stop-color="#ff4a50"/></linearGradient></defs><rect x="146.8" y="787" width="19.5" height="19.3" rx="2" fill="url(#gr)" stroke="none" stroke-width="1" /><rect x="203.9" y="791" width="13.8" height="10.4" fill="none" stroke="#0080cc" stroke-width="2.1"/><path d="M200.6 791.6999999999999 V787.9 H204.4 M216.79999999999998 787.9 H220.6 V791.6999999999999 M220.6 800.6 V804.4 H216.79999999999998 M204.4 804.4 H200.6 V800.6" fill="none" stroke="#0080cc" stroke-width="1.7" stroke-linejoin="round" stroke-linecap="round"/><path d="M244.4 791.6999999999999 V787.9 H248.20000000000002 M260.4 787.9 H264.2 V791.6999999999999 M264.2 800.6 V804.4 H260.4 M248.20000000000002 804.4 H244.4 V800.6" fill="none" stroke="#0080cc" stroke-width="1.7" stroke-linejoin="round" stroke-linecap="round"/><rect x="246.9" y="790.3" width="8.1" height="5.1" rx="0.8" fill="#0080cc" stroke="none" stroke-width="1" /><path d="M259.1 792 L262.3 798 H256 Z" fill="#0080cc" stroke="#0080cc" stroke-width="0.6" stroke-linejoin="round"/><ellipse cx="251.8" cy="800.5" rx="3.6" ry="2.1" fill="#0080cc"/><path d="M289.6 796.4 L295.3 790.8 A6 6 0 0 1 303.7 799.2 L298 804.9" fill="none" stroke="#0080cc" stroke-width="5.4" stroke-linejoin="round"/><path d="M292.8 799.8 L290.3 803 H293.6 L291.2 806.2" fill="none" stroke="#0080cc" stroke-width="1.7" stroke-linejoin="round" stroke-linecap="round"/><rect x="332.5" y="787.8" width="17.2" height="17" rx="1.5" fill="none" stroke="#0080cc" stroke-width="1.8" /><path d="M332.5 793.5 H349.7 M332.5 799.2 H349.7 M338.2 787.8 V804.8 M344 787.8 V804.8" stroke="#0080cc" stroke-width="1.8"/><rect x="1424.2" y="14.8" width="17.6" height="14" rx="1.5" fill="none" stroke="#0080cc" stroke-width="2"/><path d="M1427 25.5 l4 -4 l2.5 2.5 l5 -5" fill="none" stroke="#0080cc" stroke-width="2"/><rect x="1427.5" y="18" width="2.4" height="2.4" rx="0" fill="#0080cc" stroke="none" stroke-width="1" /><rect x="1416" y="33.5" width="33.5" height="2" rx="0" fill="#0080cc" stroke="none" stroke-width="1" /><path d="M1516 20.5 a2 2 0 0 1 2 -2 h2.6 l1.8 -4 h6.2 l1.8 4 h2.6 a2 2 0 0 1 2 2 v8.8 a2 2 0 0 1 -2 2 h-15 a2 2 0 0 1 -2 -2 z" fill="none" stroke="#999999" stroke-width="2.3" stroke-linejoin="round"/><circle cx="1525.5" cy="23.8" r="2" fill="none" stroke="#999999" stroke-width="1.8"/><rect x="1371.7" y="49.7" width="83" height="20.6" rx="3" fill="#fff" stroke="#aaa" stroke-width="1"/><rect x="1460.2" y="49.7" width="91.6" height="20.6" rx="3" fill="#fff" stroke="#aaa" stroke-width="1"/><path d="M1443.2 59 h7 l-3.5 3.8 z M1539.9 59 h7 l-3.5 3.8 z" fill="#111"/><circle cx="1572.2" cy="59.8" r="5" fill="none" stroke="#999999" stroke-width="2"/><path d="M1576 63.6 l3.5 3.2" stroke="#999999" stroke-width="2.2" stroke-linecap="round"/><rect x="1588.8" y="76" width="3.9" height="144" rx="2" fill="#dcdcdc" stroke="none" stroke-width="1" /><path d="M1380.2 92.5 H1407.6 V78.8 L1434.6 105.9 L1407.6 133 V119 H1380.2 Z" fill="none" stroke="#5a5a5a" stroke-width="1.1" stroke-linejoin="miter"/><path d="M1450.3 92.5 H1491.3 L1504.6 105.9 L1491.3 119.3 H1450.3 Z" fill="none" stroke="#5a5a5a" stroke-width="1.1" stroke-linejoin="miter"/><path d="M1520.9 89.2 H1561 L1575.3 105.8 L1561 122.4 H1520.9 L1535.4 105.8 Z" fill="none" stroke="#5a5a5a" stroke-width="1.1" stroke-linejoin="miter"/><circle cx="1407.6" cy="184.5" r="27.3" fill="none" stroke="#5a5a5a" stroke-width="1.1"/><circle cx="1407.9" cy="184.5" r="16.4" fill="none" stroke="#5a5a5a" stroke-width="1.1"/><path d="M1464.9 157.2 H1491.3 V170.8 H1505.2 V198.2 H1491.3 V211.8 H1464.9 V198.2 H1450.4 V170.8 H1464.9 Z" fill="none" stroke="#5a5a5a" stroke-width="1.1" stroke-linejoin="miter"/><path d="M1542.50 167.90 L1537.60 167.90 L1548.10 157.10 L1558.60 167.90 L1553.70 167.90 L1553.70 178.80 L1564.60 178.80 L1564.60 173.90 L1575.40 184.40 L1564.60 194.90 L1564.60 190.00 L1553.70 190.00 L1553.70 200.90 L1558.60 200.90 L1548.10 211.70 L1537.60 200.90 L1542.50 200.90 L1542.50 190.00 L1531.60 190.00 L1531.60 194.90 L1520.80 184.40 L1531.60 173.90 L1531.60 178.80 L1542.50 178.80 Z" fill="none" stroke="#5a5a5a" stroke-width="1.1" stroke-linejoin="miter"/><path d="M1380.6 262.8 L1391.8 251.8 V257 H1424 V251.8 L1434.8 262.8 L1424 274 V268.6 H1391.8 V274 Z" fill="none" stroke="#5a5a5a" stroke-width="1.1" stroke-linejoin="miter"/><path d="M1477.90 237.60 L1484.84 256.25 L1504.72 257.09 L1489.12 269.45 L1494.48 288.61 L1477.90 277.60 L1461.32 288.61 L1466.68 269.45 L1451.08 257.09 L1470.96 256.25 Z" fill="none" stroke="#5a5a5a" stroke-width="1.1" stroke-linejoin="miter"/><path d="M1548.1 288 L1524.5 264.5 C1515.5 255.5 1518.5 237.7 1534.5 237.7 C1541.5 237.7 1545.5 240 1548.1 242.6 C1550.7 240 1554.7 237.7 1561.7 237.7 C1577.7 237.7 1580.7 255.5 1571.7 264.5 Z" fill="none" stroke="#5a5a5a" stroke-width="1.1" stroke-linejoin="miter"/><path d="M1409.30 343.10 L1409.35 343.28 L1409.39 343.47 L1409.41 343.66 L1409.43 343.85 L1409.44 344.05 L1409.44 344.25 L1409.42 344.45 L1409.39 344.66 L1409.35 344.86 L1409.30 345.06 L1409.24 345.27 L1409.16 345.47 L1409.08 345.67 L1408.98 345.87 L1408.87 346.07 L1408.74 346.26 L1408.61 346.44 L1408.46 346.62 L1408.30 346.79 L1408.13 346.96 L1407.95 347.12 L1407.76 347.27 L1407.55 347.41 L1407.34 347.54 L1407.12 347.66 L1406.89 347.77 L1406.66 347.87 L1406.41 347.95 L1406.16 348.03 L1405.90 348.09 L1405.64 348.13 L1405.37 348.17 L1405.09 348.18 L1404.82 348.19 L1404.54 348.17 L1404.26 348.15 L1403.98 348.10 L1403.70 348.04 L1403.42 347.97 L1403.14 347.88 L1402.87 347.77 L1402.60 347.65 L1402.33 347.51 L1402.07 347.36 L1401.81 347.19 L1401.56 347.00 L1401.32 346.80 L1401.09 346.59 L1400.87 346.36 L1400.66 346.12 L1400.47 345.87 L1400.28 345.60 L1400.11 345.32 L1399.95 345.03 L1399.80 344.73 L1399.68 344.42 L1399.56 344.10 L1399.47 343.78 L1399.39 343.44 L1399.33 343.10 L1399.28 342.75 L1399.26 342.40 L1399.25 342.05 L1399.26 341.69 L1399.29 341.33 L1399.34 340.97 L1399.42 340.61 L1399.51 340.25 L1399.62 339.90 L1399.75 339.55 L1399.90 339.20 L1400.07 338.86 L1400.26 338.53 L1400.46 338.20 L1400.69 337.89 L1400.93 337.58 L1401.20 337.29 L1401.48 337.01 L1401.77 336.74 L1402.08 336.49 L1402.41 336.25 L1402.75 336.03 L1403.11 335.83 L1403.48 335.64 L1403.86 335.47 L1404.25 335.32 L1404.65 335.19 L1405.06 335.09 L1405.48 335.00 L1405.90 334.94 L1406.33 334.90 L1406.76 334.88 L1407.20 334.88 L1407.64 334.91 L1408.08 334.96 L1408.52 335.04 L1408.96 335.13 L1409.39 335.26 L1409.82 335.40 L1410.25 335.57 L1410.66 335.77 L1411.07 335.98 L1411.47 336.22 L1411.86 336.48 L1412.23 336.77 L1412.60 337.07 L1412.94 337.40 L1413.27 337.74 L1413.59 338.11 L1413.89 338.49 L1414.16 338.89 L1414.42 339.31 L1414.66 339.74 L1414.87 340.19 L1415.06 340.64 L1415.23 341.12 L1415.37 341.60 L1415.49 342.09 L1415.58 342.59 L1415.65 343.10 L1415.69 343.61 L1415.70 344.13 L1415.69 344.65 L1415.64 345.17 L1415.57 345.69 L1415.47 346.21 L1415.35 346.73 L1415.19 347.24 L1415.01 347.74 L1414.80 348.24 L1414.57 348.73 L1414.30 349.20 L1414.01 349.67 L1413.70 350.12 L1413.36 350.56 L1412.99 350.97 L1412.60 351.38 L1412.19 351.76 L1411.76 352.12 L1411.30 352.46 L1410.83 352.78 L1410.34 353.07 L1409.83 353.34 L1409.31 353.58 L1408.77 353.80 L1408.21 353.98 L1407.65 354.14 L1407.07 354.27 L1406.49 354.37 L1405.90 354.44 L1405.30 354.47 L1404.70 354.48 L1404.10 354.45 L1403.50 354.40 L1402.90 354.31 L1402.30 354.18 L1401.70 354.03 L1401.12 353.84 L1400.54 353.63 L1399.97 353.38 L1399.41 353.10 L1398.86 352.79 L1398.33 352.45 L1397.82 352.08 L1397.32 351.68 L1396.85 351.25 L1396.39 350.80 L1395.96 350.32 L1395.55 349.82 L1395.16 349.30 L1394.81 348.75 L1394.48 348.18 L1394.18 347.60 L1393.91 347.00 L1393.67 346.38 L1393.46 345.74 L1393.29 345.10 L1393.15 344.44 L1393.05 343.77 L1392.98 343.10 L1392.94 342.42 L1392.94 341.74 L1392.98 341.05 L1393.05 340.37 L1393.16 339.69 L1393.31 339.01 L1393.49 338.34 L1393.71 337.67 L1393.96 337.02 L1394.25 336.37 L1394.57 335.74 L1394.93 335.13 L1395.32 334.53 L1395.74 333.96 L1396.20 333.40 L1396.68 332.87 L1397.20 332.36 L1397.74 331.87 L1398.31 331.42 L1398.91 330.99 L1399.53 330.59 L1400.17 330.23 L1400.83 329.90 L1401.51 329.60 L1402.21 329.34 L1402.93 329.11 L1403.65 328.92 L1404.39 328.77 L1405.14 328.66 L1405.90 328.59 L1406.66 328.55 L1407.43 328.56 L1408.20 328.61 L1408.96 328.70 L1409.72 328.83 L1410.48 329.00 L1411.23 329.21 L1411.97 329.46 L1412.70 329.74 L1413.42 330.07 L1414.12 330.44 L1414.80 330.85 L1415.47 331.29 L1416.11 331.76 L1416.72 332.28 L1417.31 332.82 L1417.88 333.40 L1418.41 334.01 L1418.91 334.65 L1419.38 335.31 L1419.82 336.01 L1420.22 336.72 L1420.58 337.46 L1420.91 338.22 L1421.20 339.00 L1421.44 339.80 L1421.64 340.61 L1421.81 341.43 L1421.93 342.26 L1422.00 343.10 L1422.03 343.95 L1422.02 344.79 L1421.96 345.64 L1421.86 346.49 L1421.71 347.34 L1421.51 348.17 L1421.28 349.00 L1420.99 349.82 L1420.67 350.63 L1420.30 351.41 L1419.89 352.19 L1419.44 352.94 L1418.95 353.66 L1418.42 354.37 L1417.85 355.05 L1417.24 355.69 L1416.60 356.31 L1415.92 356.90 L1415.22 357.45 L1414.48 357.96 L1413.71 358.44 L1412.92 358.87 L1412.11 359.27 L1411.27 359.62 L1410.41 359.93 L1409.53 360.19 L1408.64 360.41 L1407.74 360.59 L1406.82 360.71 L1405.90 360.79 L1404.97 360.82 L1404.04 360.80 L1403.11 360.73 L1402.18 360.61 L1401.25 360.44 L1400.34 360.22 L1399.43 359.96 L1398.53 359.65 L1397.65 359.28 L1396.79 358.88 L1395.95 358.42 L1395.13 357.92 L1394.34 357.38 L1393.57 356.79 L1392.83 356.17 L1392.13 355.50 L1391.46 354.80 L1390.82 354.06 L1390.22 353.28 L1389.67 352.47 L1389.15 351.63 L1388.68 350.77 L1388.25 349.87 L1387.87 348.96 L1387.54 348.02 L1387.25 347.06 L1387.02 346.09 L1386.84 345.10 L1386.70 344.11 L1386.62 343.10 L1386.60 342.09 L1386.63 341.07 L1386.71 340.06 L1386.84 339.05 L1387.03 338.04 L1387.27 337.05 L1387.56 336.06 L1387.90 335.09 L1388.30 334.13 L1388.75 333.20 L1389.25 332.29 L1389.79 331.40 L1390.39 330.54 L1391.03 329.71 L1391.71 328.91 L1392.44 328.15 L1393.20 327.42 L1394.01 326.74 L1394.85 326.09 L1395.73 325.49 L1396.64 324.94 L1397.59 324.43 L1398.56 323.97 L1399.55 323.56 L1400.57 323.20 L1401.61 322.90 L1402.66 322.65 L1403.73 322.46 L1404.81 322.32 L1405.90 322.24 L1406.99 322.21 L1408.09 322.25 L1409.19 322.34 L1410.28 322.49 L1411.37 322.69 L1412.44 322.96 L1413.51 323.28 L1414.56 323.65 L1415.59 324.09 L1416.60 324.57 L1417.58 325.12 L1418.54 325.71 L1419.46 326.35 L1420.36 327.05 L1421.21 327.79 L1422.03 328.57 L1422.81 329.40 L1423.55 330.28 L1424.24 331.19 L1424.88 332.14 L1425.48 333.12 L1426.02 334.14 L1426.51 335.19 L1426.95 336.26 L1427.33 337.36 L1427.65 338.48 L1427.92 339.61 L1428.12 340.76 L1428.27 341.93 L1428.35 343.10 L1428.37 344.28 L1428.33 345.46 L1428.23 346.64 L1428.07 347.81 L1427.84 348.98 L1427.55 350.14 L1427.20 351.28 L1426.80 352.40 L1426.33 353.51 L1425.80 354.59 L1425.22 355.64 L1424.58 356.67 L1423.88 357.66 L1423.13 358.62 L1422.34 359.54 L1421.49 360.41 L1420.59 361.25 L1419.66 362.03 L1418.67 362.77 L1417.65 363.46 L1416.60 364.09 L1415.50 364.67 L1414.38 365.20 L1413.23 365.66 L1412.05 366.06 L1410.85 366.41 L1409.64 366.68 L1408.40 366.90 L1407.16 367.05 L1405.90 367.14 L1404.64 367.16 L1403.38 367.11 L1402.11 367.00 L1400.86 366.82 L1399.61 366.57 L1398.37 366.26 L1397.15 365.89 L1395.95 365.45 L1394.77 364.94 L1393.62 364.38 L1392.49 363.75 L1391.40 363.06 L1390.34 362.32 L1389.32 361.51 L1388.34 360.66 L1387.41 359.75 L1386.52 358.79 L1385.68 357.79 L1384.90 356.74 L1384.17 355.65 L1383.49 354.52 L1382.88 353.35 L1382.32 352.15 L1381.83 350.92 L1381.40 349.66 L1381.04 348.38 L1380.75 347.08 L1380.52 345.77 L1380.36 344.44 L1380.28 343.10 L1380.26 341.76 L1380.31 340.41 L1380.43 339.07 L1380.63 337.73 L1380.89 336.40 L1381.23 335.08 L1381.63 333.78 L1382.10 332.51 L1382.64 331.25 L1383.25 330.02 L1383.92 328.83 L1384.66 327.66 L1385.45 326.54 L1386.31 325.46 L1387.22 324.42 L1388.19 323.43 L1389.21 322.49 L1390.28 321.60 L1391.40 320.77 L1392.56 319.99 L1393.76 319.28 L1395.00 318.63 L1396.28 318.04 L1397.59 317.52 L1398.93 317.07 L1400.29 316.69 L1401.67 316.38 L1403.07 316.14 L1404.48 315.98 L1405.90 315.89 L1407.33 315.87 L1408.76 315.93 L1410.18 316.07 L1411.60 316.28 L1413.01 316.56 L1414.41 316.92 L1415.78 317.35 L1417.14 317.85 L1418.47 318.43 L1419.77 319.08 L1421.04 319.79 L1422.27 320.57 L1423.46 321.42 L1424.60 322.33 L1425.70 323.30 L1426.75 324.32 L1427.75 325.41 L1428.69 326.55 L1429.57 327.73 L1430.38 328.96 L1431.14 330.24 L1431.82 331.56 L1432.44 332.91 L1432.99 334.30 L1433.46 335.71 L1433.86 337.16 L1434.19 338.62 L1434.44 340.10 L1434.61 341.60 L1434.70 343.10" fill="none" stroke="#5a5a5a" stroke-width="1.1" stroke-linejoin="miter"/><path d="M1478.10 314.40 L1485.70 328.44 L1501.66 328.00 L1493.30 341.60 L1501.66 355.20 L1485.70 354.76 L1478.10 368.80 L1470.50 354.76 L1454.54 355.20 L1462.90 341.60 L1454.54 328.00 L1470.50 328.44 Z" fill="none" stroke="#5a5a5a" stroke-width="1.1" stroke-linejoin="miter"/><path d="M1539.4 317.2 H1575.6 L1557.9 366 H1520.9 Z" fill="none" stroke="#5a5a5a" stroke-width="1.1" stroke-linejoin="miter"/><path d="M1396 395 Q1407.5 391.5 1419 395" fill="none" stroke="#5a5a5a" stroke-width="1.1"/><path d="M1542 396 L1548 392.5 L1554 396" fill="none" stroke="#5a5a5a" stroke-width="1.1"/><path d="M1375 427.5 a3.2 3.2 0 0 1 3.2 -3.2 H1585.9 a3.2 3.2 0 0 1 3.2 3.2 V458 H1375 Z" fill="#0080cc"/><rect x="1375" y="458" width="214.1" height="33" rx="0" fill="#ebebeb" stroke="none" stroke-width="1" /><rect x="1589.8" y="424.5" width="3" height="134" rx="1.5" fill="#d9d9d9" stroke="none" stroke-width="1" /><circle cx="1479.4" cy="717.4" r="51.4" fill="none" stroke="#0080cc" stroke-width="4"/><circle cx="1479.4" cy="717.4" r="45.2" fill="#0080cc"/><defs><linearGradient id="gg" x1="0" y1="0" x2="0" y2="1"><stop offset="0" stop-color="#2fbf5c"/><stop offset="1" stop-color="#6ee28e"/></linearGradient></defs><rect x="1591.8" y="673" width="5.5" height="49" rx="2.7" fill="#a8a8a8" stroke="none" stroke-width="1" /><path d="M1591.8 691 H1597.3 V719 a2.75 2.75 0 0 1 -5.5 0 Z" fill="url(#gg)"/><rect x="1591.2" y="776" width="6.4" height="45" rx="3.2" fill="#5f6b75" stroke="none" stroke-width="1" /><rect x="1593" y="778" width="2.8" height="43" rx="1.4" fill="#85909a" stroke="none" stroke-width="1" /><rect x="1593" y="792" width="2.8" height="30" rx="0" fill="#38a8e6" stroke="none" stroke-width="1" /><circle cx="1594.4" cy="817" r="4" fill="#38a8e6" stroke="#5f6b75" stroke-width="1.4"/><rect x="1376" y="784.5" width="214" height="23" rx="2" fill="#fff" stroke="#d6d6d6" stroke-width="2"/><rect x="1536.5" y="783.5" width="54" height="25" rx="0" fill="#d6d6d6" stroke="none" stroke-width="1" /><circle cx="1436" cy="796.9" r="5.6" fill="none" stroke="#f08a2c" stroke-width="1.4"/><path d="M1433.3 794.2 l5.4 5.4 M1438.7 794.2 l-5.4 5.4" stroke="#f08a2c" stroke-width="1.4"/></svg>
<div style="position:absolute;left:0;top:0;width:1600px;height:818px;z-index:2"><div class="t" style="left:-160px;width:400px;text-align:center;top:46.8px;font-size:14px;line-height:14px;color:#555;font-weight:normal;-webkit-text-stroke:0.2px #555;">文件</div><div class="t" style="left:-97.5px;width:400px;text-align:center;top:46.8px;font-size:14px;line-height:14px;color:#555;font-weight:normal;-webkit-text-stroke:0.2px #555;">保存</div><div class="t" style="left:-8.199999999999989px;width:400px;text-align:center;top:46.8px;font-size:14px;line-height:14px;color:#555;font-weight:normal;-webkit-text-stroke:0.2px #555;">撤销</div><div class="t" style="left:54.80000000000001px;width:400px;text-align:center;top:46.8px;font-size:14px;line-height:14px;color:#555;font-weight:normal;-webkit-text-stroke:0.2px #555;">重做</div><div class="t" style="left:135.8px;width:400px;text-align:center;top:46.8px;font-size:14px;line-height:14px;color:#555;font-weight:normal;-webkit-text-stroke:0.2px #555;">原点</div><div class="t" style="left:372px;top:16px;font-size:14px;line-height:14px;color:#0080cc;font-weight:bold;-webkit-text-stroke:0.4px #0080cc;">X</div><div class="t" style="left:372px;top:42px;font-size:14px;line-height:14px;color:#0080cc;font-weight:bold;-webkit-text-stroke:0.4px #0080cc;">Y</div><div class="t" style="left:391px;top:16.95px;font-size:13.5px;line-height:13.5px;color:#111;font-weight:normal;-webkit-text-stroke:0.25px #111;">68.84</div><div class="t" style="left:391px;top:42.95px;font-size:13.5px;line-height:13.5px;color:#111;font-weight:normal;-webkit-text-stroke:0.25px #111;">41.78</div><div class="t" style="left:444.5px;top:17px;font-size:13.5px;line-height:13.5px;color:#111;font-weight:normal;-webkit-text-stroke:0.3px #111;">mm</div><div class="t" style="left:444.5px;top:43px;font-size:13.5px;line-height:13.5px;color:#111;font-weight:normal;-webkit-text-stroke:0.3px #111;">mm</div><div class="t" style="left:302px;width:400px;text-align:center;top:46.8px;font-size:14px;line-height:14px;color:#555;font-weight:normal;-webkit-text-stroke:0.2px #555;">等比</div><div class="t" style="left:565px;top:16.2px;font-size:13.5px;line-height:13.5px;color:#111;font-weight:normal;-webkit-text-stroke:0.25px #111;">216.00</div><div class="t" style="left:565px;top:42.2px;font-size:13.5px;line-height:13.5px;color:#111;font-weight:normal;-webkit-text-stroke:0.25px #111;">216.00</div><div class="t" style="left:618.5px;top:17px;font-size:13.5px;line-height:13.5px;color:#111;font-weight:normal;-webkit-text-stroke:0.3px #111;">mm</div><div class="t" style="left:618.5px;top:43px;font-size:13.5px;line-height:13.5px;color:#111;font-weight:normal;-webkit-text-stroke:0.3px #111;">mm</div><div class="t" style="left:650px;top:16.45px;font-size:13.5px;line-height:13.5px;color:#111;font-weight:normal;-webkit-text-stroke:0.25px #111;">100</div><div class="t" style="left:650px;top:42.45px;font-size:13.5px;line-height:13.5px;color:#111;font-weight:normal;-webkit-text-stroke:0.25px #111;">100</div><div class="t" style="left:684px;top:15px;font-size:14px;line-height:14px;color:#111;font-weight:normal;-webkit-text-stroke:0.3px #111;">%</div><div class="t" style="left:684px;top:41px;font-size:14px;line-height:14px;color:#111;font-weight:normal;-webkit-text-stroke:0.3px #111;">%</div><div class="t" style="left:539.5px;width:400px;text-align:center;top:44.2px;font-size:13.5px;line-height:13.5px;color:#111;font-weight:normal;-webkit-text-stroke:0.25px #111;">90.00</div><div class="t" style="left:635px;width:400px;text-align:center;top:46.8px;font-size:14px;line-height:14px;color:#555;font-weight:normal;-webkit-text-stroke:0.2px #555;">造物</div><div class="t" style="left:724.5px;width:400px;text-align:center;top:46.8px;font-size:14px;line-height:14px;color:#555;font-weight:normal;-webkit-text-stroke:0.2px #555;">设置</div><div class="t" style="left:787px;width:400px;text-align:center;top:46.8px;font-size:14px;line-height:14px;color:#555;font-weight:normal;-webkit-text-stroke:0.2px #555;">帮助</div><div class="t" style="left:-77.8px;width:400px;text-align:center;top:77.6px;font-size:8.5px;line-height:8.5px;color:#1b5f93;font-weight:normal;-webkit-text-stroke:0.2px #1b5f93;">38</div><div class="t" style="left:-36.0px;width:400px;text-align:center;top:77.6px;font-size:8.5px;line-height:8.5px;color:#1b5f93;font-weight:normal;-webkit-text-stroke:0.2px #1b5f93;">58</div><div class="t" style="left:5.799999999999983px;width:400px;text-align:center;top:77.6px;font-size:8.5px;line-height:8.5px;color:#1b5f93;font-weight:normal;-webkit-text-stroke:0.2px #1b5f93;">77</div><div class="t" style="left:47.599999999999966px;width:400px;text-align:center;top:77.6px;font-size:8.5px;line-height:8.5px;color:#1b5f93;font-weight:normal;-webkit-text-stroke:0.2px #1b5f93;">96</div><div class="t" style="left:89.39999999999998px;width:400px;text-align:center;top:77.6px;font-size:8.5px;line-height:8.5px;color:#1b5f93;font-weight:normal;-webkit-text-stroke:0.2px #1b5f93;">115</div><div class="t" style="left:131.2px;width:400px;text-align:center;top:77.6px;font-size:8.5px;line-height:8.5px;color:#1b5f93;font-weight:normal;-webkit-text-stroke:0.2px #1b5f93;">135</div><div class="t" style="left:172.99999999999994px;width:400px;text-align:center;top:77.6px;font-size:8.5px;line-height:8.5px;color:#1b5f93;font-weight:normal;-webkit-text-stroke:0.2px #1b5f93;">154</div><div class="t" style="left:214.79999999999995px;width:400px;text-align:center;top:77.6px;font-size:8.5px;line-height:8.5px;color:#1b5f93;font-weight:normal;-webkit-text-stroke:0.2px #1b5f93;">173</div><div class="t" style="left:256.59999999999997px;width:400px;text-align:center;top:77.6px;font-size:8.5px;line-height:8.5px;color:#1b5f93;font-weight:normal;-webkit-text-stroke:0.2px #1b5f93;">192</div><div class="t" style="left:298.4px;width:400px;text-align:center;top:77.6px;font-size:8.5px;line-height:8.5px;color:#1b5f93;font-weight:normal;-webkit-text-stroke:0.2px #1b5f93;">211</div><div class="t" style="left:340.20000000000005px;width:400px;text-align:center;top:77.6px;font-size:8.5px;line-height:8.5px;color:#1b5f93;font-weight:normal;-webkit-text-stroke:0.2px #1b5f93;">231</div><div class="t" style="left:382.0px;width:400px;text-align:center;top:77.6px;font-size:8.5px;line-height:8.5px;color:#1b5f93;font-weight:normal;-webkit-text-stroke:0.2px #1b5f93;">250</div><div class="t" style="left:423.79999999999995px;width:400px;text-align:center;top:77.6px;font-size:8.5px;line-height:8.5px;color:#1b5f93;font-weight:normal;-webkit-text-stroke:0.2px #1b5f93;">269</div><div class="t" style="left:465.6px;width:400px;text-align:center;top:77.6px;font-size:8.5px;line-height:8.5px;color:#1b5f93;font-weight:normal;-webkit-text-stroke:0.2px #1b5f93;">288</div><div class="t" style="left:507.4px;width:400px;text-align:center;top:77.6px;font-size:8.5px;line-height:8.5px;color:#1b5f93;font-weight:normal;-webkit-text-stroke:0.2px #1b5f93;">308</div><div class="t" style="left:549.2px;width:400px;text-align:center;top:77.6px;font-size:8.5px;line-height:8.5px;color:#1b5f93;font-weight:normal;-webkit-text-stroke:0.2px #1b5f93;">327</div><div class="t" style="left:591.0px;width:400px;text-align:center;top:77.6px;font-size:8.5px;line-height:8.5px;color:#1b5f93;font-weight:normal;-webkit-text-stroke:0.2px #1b5f93;">346</div><div class="t" style="left:632.8px;width:400px;text-align:center;top:77.6px;font-size:8.5px;line-height:8.5px;color:#1b5f93;font-weight:normal;-webkit-text-stroke:0.2px #1b5f93;">365</div><div class="t" style="left:674.6px;width:400px;text-align:center;top:77.6px;font-size:8.5px;line-height:8.5px;color:#1b5f93;font-weight:normal;-webkit-text-stroke:0.2px #1b5f93;">384</div><div class="t" style="left:716.4px;width:400px;text-align:center;top:77.6px;font-size:8.5px;line-height:8.5px;color:#1b5f93;font-weight:normal;-webkit-text-stroke:0.2px #1b5f93;">404</div><div class="t" style="left:758.2px;width:400px;text-align:center;top:77.6px;font-size:8.5px;line-height:8.5px;color:#1b5f93;font-weight:normal;-webkit-text-stroke:0.2px #1b5f93;">423</div><div class="t" style="left:800.0px;width:400px;text-align:center;top:77.6px;font-size:8.5px;line-height:8.5px;color:#1b5f93;font-weight:normal;-webkit-text-stroke:0.2px #1b5f93;">442</div><div class="t" style="left:841.8px;width:400px;text-align:center;top:77.6px;font-size:8.5px;line-height:8.5px;color:#1b5f93;font-weight:normal;-webkit-text-stroke:0.2px #1b5f93;">461</div><div class="t" style="left:883.6000000000001px;width:400px;text-align:center;top:77.6px;font-size:8.5px;line-height:8.5px;color:#1b5f93;font-weight:normal;-webkit-text-stroke:0.2px #1b5f93;">481</div><div class="t" style="left:925.3999999999999px;width:400px;text-align:center;top:77.6px;font-size:8.5px;line-height:8.5px;color:#1b5f93;font-weight:normal;-webkit-text-stroke:0.2px #1b5f93;">500</div><div class="t" style="left:967.2px;width:400px;text-align:center;top:77.6px;font-size:8.5px;line-height:8.5px;color:#1b5f93;font-weight:normal;-webkit-text-stroke:0.2px #1b5f93;">519</div><div class="t" style="left:1009.0px;width:400px;text-align:center;top:77.6px;font-size:8.5px;line-height:8.5px;color:#1b5f93;font-weight:normal;-webkit-text-stroke:0.2px #1b5f93;">538</div><div class="t" style="left:1050.8px;width:400px;text-align:center;top:77.6px;font-size:8.5px;line-height:8.5px;color:#1b5f93;font-weight:normal;-webkit-text-stroke:0.2px #1b5f93;">557</div><div class="t" style="left:1092.6px;width:400px;text-align:center;top:77.6px;font-size:8.5px;line-height:8.5px;color:#1b5f93;font-weight:normal;-webkit-text-stroke:0.2px #1b5f93;">577</div><div class="t" style="left:1134.3999999999999px;width:400px;text-align:center;top:77.6px;font-size:8.5px;line-height:8.5px;color:#1b5f93;font-weight:normal;-webkit-text-stroke:0.2px #1b5f93;">596</div><div class="t" style="left:61px;top:104.75px;width:60px;text-align:center;font-size:8.5px;line-height:8.5px;color:#1b5f93;-webkit-text-stroke:0.2px #1b5f93;transform:rotate(-90deg);">19</div><div class="t" style="left:61px;top:146.55px;width:60px;text-align:center;font-size:8.5px;line-height:8.5px;color:#1b5f93;-webkit-text-stroke:0.2px #1b5f93;transform:rotate(-90deg);">38</div><div class="t" style="left:61px;top:188.35px;width:60px;text-align:center;font-size:8.5px;line-height:8.5px;color:#1b5f93;-webkit-text-stroke:0.2px #1b5f93;transform:rotate(-90deg);">58</div><div class="t" style="left:61px;top:230.14999999999998px;width:60px;text-align:center;font-size:8.5px;line-height:8.5px;color:#1b5f93;-webkit-text-stroke:0.2px #1b5f93;transform:rotate(-90deg);">77</div><div class="t" style="left:61px;top:271.95px;width:60px;text-align:center;font-size:8.5px;line-height:8.5px;color:#1b5f93;-webkit-text-stroke:0.2px #1b5f93;transform:rotate(-90deg);">96</div><div class="t" style="left:61px;top:313.75px;width:60px;text-align:center;font-size:8.5px;line-height:8.5px;color:#1b5f93;-webkit-text-stroke:0.2px #1b5f93;transform:rotate(-90deg);">115</div><div class="t" style="left:61px;top:355.54999999999995px;width:60px;text-align:center;font-size:8.5px;line-height:8.5px;color:#1b5f93;-webkit-text-stroke:0.2px #1b5f93;transform:rotate(-90deg);">135</div><div class="t" style="left:61px;top:397.34999999999997px;width:60px;text-align:center;font-size:8.5px;line-height:8.5px;color:#1b5f93;-webkit-text-stroke:0.2px #1b5f93;transform:rotate(-90deg);">154</div><div class="t" style="left:61px;top:439.15px;width:60px;text-align:center;font-size:8.5px;line-height:8.5px;color:#1b5f93;-webkit-text-stroke:0.2px #1b5f93;transform:rotate(-90deg);">173</div><div class="t" style="left:61px;top:480.95px;width:60px;text-align:center;font-size:8.5px;line-height:8.5px;color:#1b5f93;-webkit-text-stroke:0.2px #1b5f93;transform:rotate(-90deg);">192</div><div class="t" style="left:61px;top:522.75px;width:60px;text-align:center;font-size:8.5px;line-height:8.5px;color:#1b5f93;-webkit-text-stroke:0.2px #1b5f93;transform:rotate(-90deg);">211</div><div class="t" style="left:61px;top:564.55px;width:60px;text-align:center;font-size:8.5px;line-height:8.5px;color:#1b5f93;-webkit-text-stroke:0.2px #1b5f93;transform:rotate(-90deg);">231</div><div class="t" style="left:61px;top:606.3499999999999px;width:60px;text-align:center;font-size:8.5px;line-height:8.5px;color:#1b5f93;-webkit-text-stroke:0.2px #1b5f93;transform:rotate(-90deg);">250</div><div class="t" style="left:61px;top:648.15px;width:60px;text-align:center;font-size:8.5px;line-height:8.5px;color:#1b5f93;-webkit-text-stroke:0.2px #1b5f93;transform:rotate(-90deg);">269</div><div class="t" style="left:61px;top:689.9499999999999px;width:60px;text-align:center;font-size:8.5px;line-height:8.5px;color:#1b5f93;-webkit-text-stroke:0.2px #1b5f93;transform:rotate(-90deg);">288</div><div class="t" style="left:61px;top:731.75px;width:60px;text-align:center;font-size:8.5px;line-height:8.5px;color:#1b5f93;-webkit-text-stroke:0.2px #1b5f93;transform:rotate(-90deg);">308</div><div class="t" style="left:87px;top:86px;font-size:8.5px;line-height:8.5px;color:#1b5f93;font-weight:normal;">mm</div><div class="t" style="left:1375px;top:55.2px;font-size:10.5px;line-height:10.5px;color:#222;font-weight:normal;-webkit-text-stroke:0.35px #222;">1.基础图案</div><div class="t" style="left:1463.5px;top:55.2px;font-size:10.5px;line-height:10.5px;color:#222;font-weight:normal;-webkit-text-stroke:0.35px #222;">1.基本图形</div><div class="t" style="left:1207.6px;width:400px;text-align:center;top:142.0px;font-size:9px;line-height:9px;color:#111;font-weight:normal;-webkit-text-stroke:0.3px #111;">箭头</div><div class="t" style="left:1277.8px;width:400px;text-align:center;top:142.0px;font-size:9px;line-height:9px;color:#111;font-weight:normal;-webkit-text-stroke:0.3px #111;">箭头1</div><div class="t" style="left:1348.0px;width:400px;text-align:center;top:142.0px;font-size:9px;line-height:9px;color:#111;font-weight:normal;-webkit-text-stroke:0.3px #111;">箭头2</div><div class="t" style="left:1207.6px;width:400px;text-align:center;top:221.3px;font-size:9px;line-height:9px;color:#111;font-weight:normal;-webkit-text-stroke:0.3px #111;">同心圆</div><div class="t" style="left:1277.8px;width:400px;text-align:center;top:221.3px;font-size:9px;line-height:9px;color:#111;font-weight:normal;-webkit-text-stroke:0.3px #111;">十字</div><div class="t" style="left:1348.0px;width:400px;text-align:center;top:221.3px;font-size:9px;line-height:9px;color:#111;font-weight:normal;-webkit-text-stroke:0.3px #111;">十字箭头</div><div class="t" style="left:1207.6px;width:400px;text-align:center;top:299.5px;font-size:9px;line-height:9px;color:#111;font-weight:normal;-webkit-text-stroke:0.3px #111;">双箭头</div><div class="t" style="left:1277.8px;width:400px;text-align:center;top:299.5px;font-size:9px;line-height:9px;color:#111;font-weight:normal;-webkit-text-stroke:0.3px #111;">五角星</div><div class="t" style="left:1348.0px;width:400px;text-align:center;top:299.5px;font-size:9px;line-height:9px;color:#111;font-weight:normal;-webkit-text-stroke:0.3px #111;">心形</div><div class="t" style="left:1207.6px;width:400px;text-align:center;top:378.0px;font-size:9px;line-height:9px;color:#111;font-weight:normal;-webkit-text-stroke:0.3px #111;">螺旋线</div><div class="t" style="left:1277.8px;width:400px;text-align:center;top:378.0px;font-size:9px;line-height:9px;color:#111;font-weight:normal;-webkit-text-stroke:0.3px #111;">六角星</div><div class="t" style="left:1348.0px;width:400px;text-align:center;top:378.0px;font-size:9px;line-height:9px;color:#111;font-weight:normal;-webkit-text-stroke:0.3px #111;">平行四边形</div><div class="t" style="left:1380.3px;top:435.5px;font-size:12.3px;line-height:12.3px;color:#fff;font-weight:bold;">加工工艺</div><div class="t" style="left:1259.5px;width:400px;text-align:center;top:435.5px;font-size:12.3px;line-height:12.3px;color:#fff;font-weight:bold;">速度</div><div class="t" style="left:1311.2px;width:400px;text-align:center;top:435.5px;font-size:12.3px;line-height:12.3px;color:#fff;font-weight:bold;">功率</div><div class="t" style="left:1363.6px;width:400px;text-align:center;top:435.5px;font-size:12.3px;line-height:12.3px;color:#fff;font-weight:bold;">输出</div><div style="position:absolute;left:1370px;top:458px;width:225px;height:185px;overflow:hidden;"><div style="position:absolute;left:7.8px;top:9.00px;width:15px;height:15px;border-radius:2px;background:#000000;"></div><div class="t" style="left:28px;top:10.90px;font-size:12.3px;line-height:13px;color:#111;font-weight:bold;">切割</div><div class="t" style="left:49.799999999999955px;width:80px;text-align:center;top:10.90px;font-size:13px;line-height:13px;color:#747474;font-weight:normal;">5.0</div><div class="t" style="left:101.29999999999995px;width:80px;text-align:center;top:10.90px;font-size:13px;line-height:13px;color:#747474;font-weight:normal;">99.0</div><svg style="position:absolute;left:0;top:0" width="225" height="187"><path d="M184.70000000000005 16.5 Q193.70000000000005 5.5 202.70000000000005 16.5 Q193.70000000000005 27.5 184.70000000000005 16.5 Z" fill="none" stroke="#111" stroke-width="1.6"/><circle cx="193.70000000000005" cy="16.5" r="3.6" fill="none" stroke="#111" stroke-width="1.6"/></svg><div style="position:absolute;left:7.8px;top:42.40px;width:15px;height:15px;border-radius:2px;background:#7cb03a;"></div><div class="t" style="left:28px;top:44.30px;font-size:12.3px;line-height:13px;color:#111;font-weight:bold;">切割</div><div class="t" style="left:49.799999999999955px;width:80px;text-align:center;top:44.30px;font-size:13px;line-height:13px;color:#111;font-weight:bold;">5.0</div><div class="t" style="left:101.29999999999995px;width:80px;text-align:center;top:44.30px;font-size:13px;line-height:13px;color:#111;font-weight:bold;">99.0</div><svg style="position:absolute;left:0;top:0" width="225" height="187"><path d="M184.70000000000005 49.89999999999998 Q193.70000000000005 38.89999999999998 202.70000000000005 49.89999999999998 Q193.70000000000005 60.89999999999998 184.70000000000005 49.89999999999998 Z" fill="none" stroke="#111" stroke-width="1.6"/><circle cx="193.70000000000005" cy="49.89999999999998" r="3.6" fill="none" stroke="#111" stroke-width="1.6"/><path d="M186.70000000000005 43.39999999999998 L201.70000000000005 56.89999999999998" stroke="#fff" stroke-width="3"/><path d="M186.70000000000005 43.39999999999998 L201.70000000000005 56.89999999999998" stroke="#111" stroke-width="1.5"/></svg><div style="position:absolute;left:7.8px;top:75.80px;width:15px;height:15px;border-radius:2px;background:#e54a3c;"></div><div class="t" style="left:28px;top:77.70px;font-size:12.3px;line-height:13px;color:#111;font-weight:bold;">切割</div><div class="t" style="left:49.799999999999955px;width:80px;text-align:center;top:77.70px;font-size:13px;line-height:13px;color:#111;font-weight:bold;">5.0</div><div class="t" style="left:101.29999999999995px;width:80px;text-align:center;top:77.70px;font-size:13px;line-height:13px;color:#111;font-weight:bold;">99.0</div><svg style="position:absolute;left:0;top:0" width="225" height="187"><path d="M184.70000000000005 83.29999999999995 Q193.70000000000005 72.29999999999995 202.70000000000005 83.29999999999995 Q193.70000000000005 94.29999999999995 184.70000000000005 83.29999999999995 Z" fill="none" stroke="#111" stroke-width="1.6"/><circle cx="193.70000000000005" cy="83.29999999999995" r="3.6" fill="none" stroke="#111" stroke-width="1.6"/><path d="M186.70000000000005 76.79999999999995 L201.70000000000005 90.29999999999995" stroke="#fff" stroke-width="3"/><path d="M186.70000000000005 76.79999999999995 L201.70000000000005 90.29999999999995" stroke="#111" stroke-width="1.5"/></svg><div style="position:absolute;left:7.8px;top:109.20px;width:15px;height:15px;border-radius:2px;background:#fff31a;"></div><div class="t" style="left:28px;top:111.10px;font-size:12.3px;line-height:13px;color:#111;font-weight:bold;">切割</div><div class="t" style="left:49.799999999999955px;width:80px;text-align:center;top:111.10px;font-size:13px;line-height:13px;color:#111;font-weight:bold;">5.0</div><div class="t" style="left:101.29999999999995px;width:80px;text-align:center;top:111.10px;font-size:13px;line-height:13px;color:#111;font-weight:bold;">99.0</div><svg style="position:absolute;left:0;top:0" width="225" height="187"><path d="M184.70000000000005 116.70000000000005 Q193.70000000000005 105.70000000000005 202.70000000000005 116.70000000000005 Q193.70000000000005 127.70000000000005 184.70000000000005 116.70000000000005 Z" fill="none" stroke="#111" stroke-width="1.6"/><circle cx="193.70000000000005" cy="116.70000000000005" r="3.6" fill="none" stroke="#111" stroke-width="1.6"/><path d="M186.70000000000005 110.20000000000005 L201.70000000000005 123.70000000000005" stroke="#fff" stroke-width="3"/><path d="M186.70000000000005 110.20000000000005 L201.70000000000005 123.70000000000005" stroke="#111" stroke-width="1.5"/></svg><div style="position:absolute;left:7.8px;top:142.60px;width:15px;height:15px;border-radius:2px;background:#ffa70f;"></div><div class="t" style="left:28px;top:144.50px;font-size:12.3px;line-height:13px;color:#111;font-weight:bold;">切割</div><div class="t" style="left:49.799999999999955px;width:80px;text-align:center;top:144.50px;font-size:13px;line-height:13px;color:#111;font-weight:bold;">5.0</div><div class="t" style="left:101.29999999999995px;width:80px;text-align:center;top:144.50px;font-size:13px;line-height:13px;color:#111;font-weight:bold;">99.0</div><svg style="position:absolute;left:0;top:0" width="225" height="187"><path d="M184.70000000000005 150.10000000000002 Q193.70000000000005 139.10000000000002 202.70000000000005 150.10000000000002 Q193.70000000000005 161.10000000000002 184.70000000000005 150.10000000000002 Z" fill="none" stroke="#111" stroke-width="1.6"/><circle cx="193.70000000000005" cy="150.10000000000002" r="3.6" fill="none" stroke="#111" stroke-width="1.6"/><path d="M186.70000000000005 143.60000000000002 L201.70000000000005 157.10000000000002" stroke="#fff" stroke-width="3"/><path d="M186.70000000000005 143.60000000000002 L201.70000000000005 157.10000000000002" stroke="#111" stroke-width="1.5"/></svg><div style="position:absolute;left:7.8px;top:176.00px;width:15px;height:15px;border-radius:2px;background:#f1cf9c;"></div><div class="t" style="left:28px;top:177.90px;font-size:12.3px;line-height:13px;color:#111;font-weight:bold;">切割</div><div class="t" style="left:49.799999999999955px;width:80px;text-align:center;top:177.90px;font-size:13px;line-height:13px;color:#111;font-weight:bold;">5.0</div><div class="t" style="left:101.29999999999995px;width:80px;text-align:center;top:177.90px;font-size:13px;line-height:13px;color:#111;font-weight:bold;">99.0</div><svg style="position:absolute;left:0;top:0" width="225" height="187"><path d="M184.70000000000005 183.5 Q193.70000000000005 172.5 202.70000000000005 183.5 Q193.70000000000005 194.5 184.70000000000005 183.5 Z" fill="none" stroke="#111" stroke-width="1.6"/><circle cx="193.70000000000005" cy="183.5" r="3.6" fill="none" stroke="#111" stroke-width="1.6"/><path d="M186.70000000000005 177.0 L201.70000000000005 190.5" stroke="#fff" stroke-width="3"/><path d="M186.70000000000005 177.0 L201.70000000000005 190.5" stroke="#111" stroke-width="1.5"/></svg></div><div class="t" style="left:1279px;width:400px;text-align:center;top:705.5px;font-size:24px;line-height:24px;color:#fff;font-weight:normal;-webkit-text-stroke:0.5px #fff;">开始</div><div class="t" style="left:1448px;top:790px;font-size:12.3px;line-height:12.3px;color:#f08a2c;font-weight:normal;-webkit-text-stroke:0.2px #f08a2c;">未连接</div><div class="t" style="left:1364.7px;width:400px;text-align:center;top:790px;font-size:12.3px;line-height:12.3px;color:#111;font-weight:bold;">切换</div></div>
<svg class="g" width="1600" height="818" viewBox="0 0 1600 818" style="z-index:3"><rect x="520.1" y="3.1" width="113.2" height="68.5" rx="3" fill="none" stroke="#ff1a1a" stroke-width="2.6"/></svg>
</body></html>
